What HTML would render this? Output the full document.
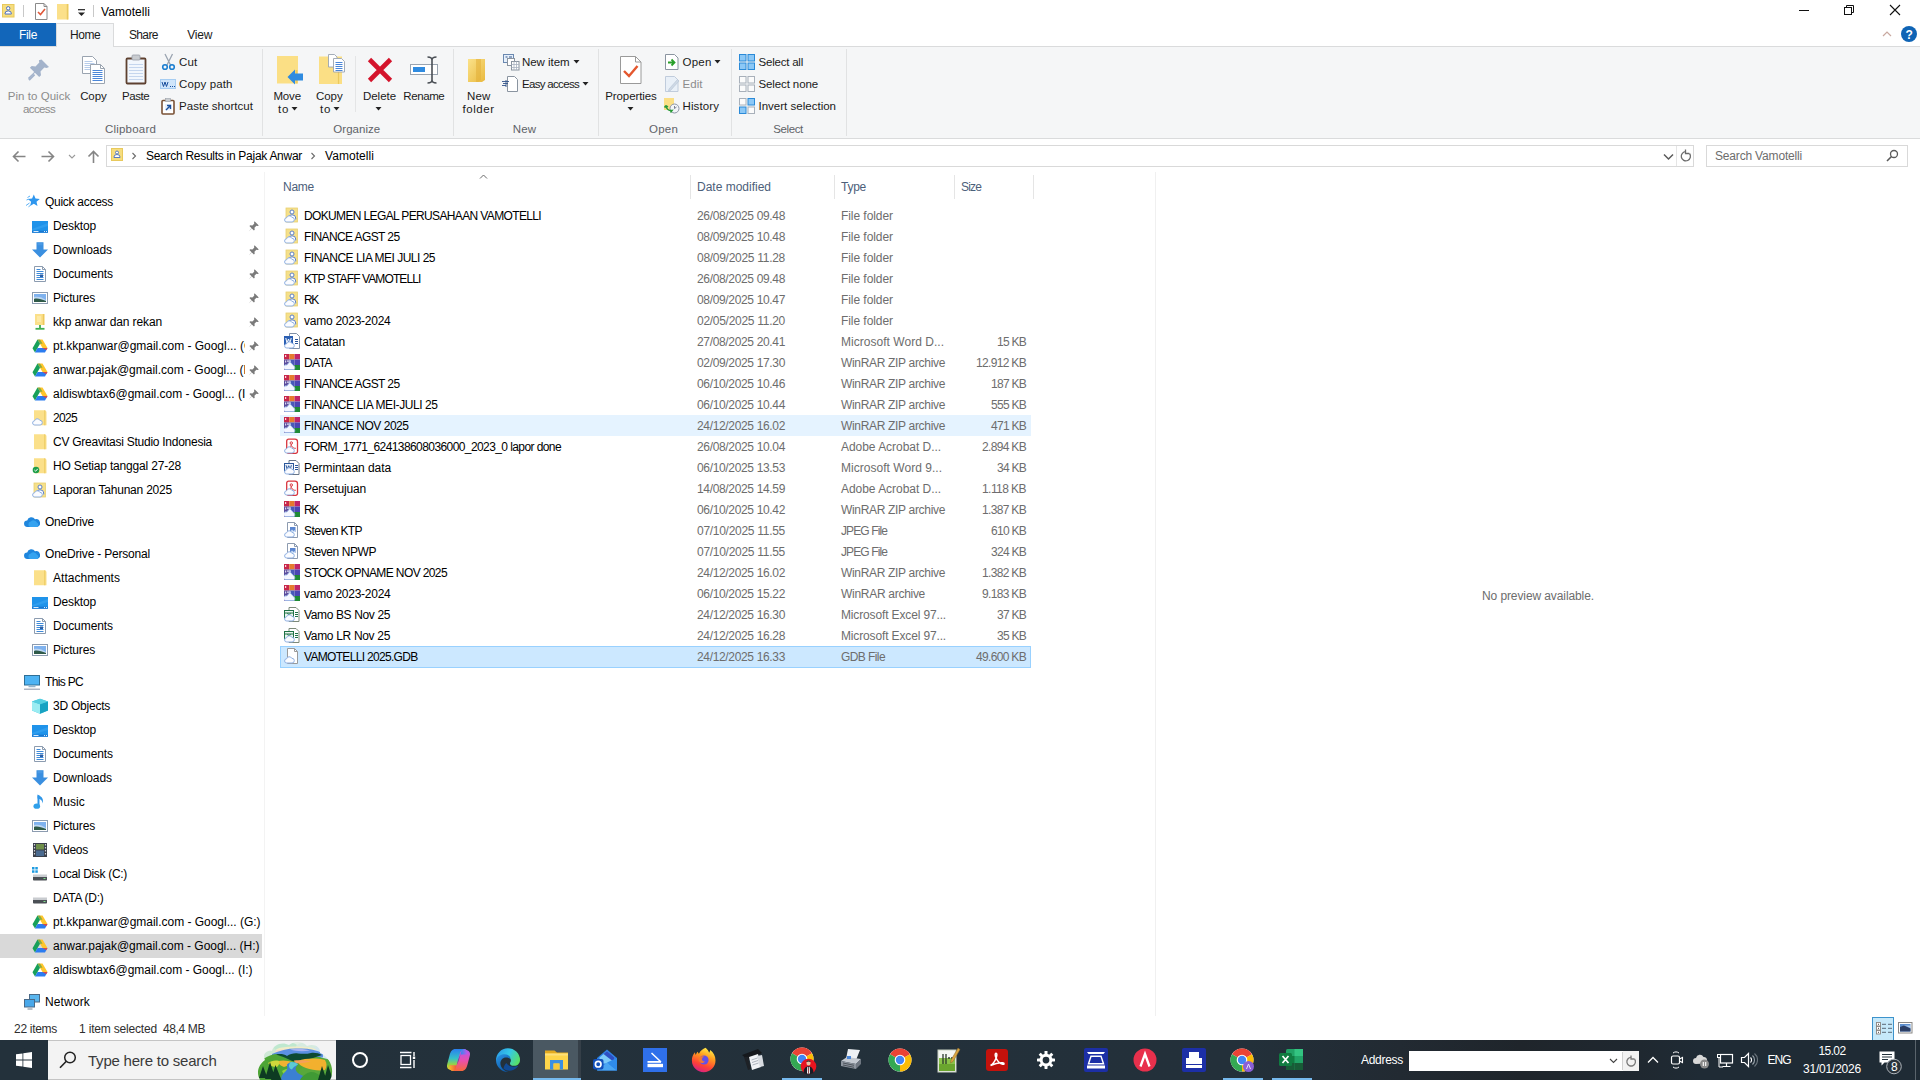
<!DOCTYPE html>
<html lang="en"><head><meta charset="utf-8"><title>Vamotelli</title>
<style>
html,body{margin:0;padding:0;background:#fff;overflow:hidden}
body{width:1920px;height:1080px;position:relative;font-family:"Liberation Sans",sans-serif;font-size:12px}
.t{position:absolute;white-space:pre;display:block}
.r{position:absolute;display:block}
</style></head>
<body>
<svg class="r" style="left:2px;top:4px;" width="13" height="14" viewBox="0 0 13 14"><rect x=".5" y=".5" width="11.500" height="12.500" fill="#f6dd7e" stroke="#e8c95c"/><circle cx="6.200" cy="4.300" r="1.700" fill="#fff" stroke="#4a6fc0" stroke-width="1"/><path d="M3 10v-.5a3.200 2.600 0 0 1 6.400 0v.5z" fill="#fff" stroke="#4a6fc0" stroke-width="1"/></svg>
<div class="r" style="left:23px;top:5px;width:1px;height:12px;background:#c8c8c8;"></div>
<svg class="r" style="left:35px;top:3px;" width="13" height="17" viewBox="0 0 13 17"><path d="M.5 .5h8.500l3 3v13h-11.500z" fill="#fff" stroke="#8a8a8a"/><path d="M9 .5v3h3" fill="none" stroke="#8a8a8a"/><path d="M3 9l2.500 2.500l4.500-5.500" fill="none" stroke="#e0583a" stroke-width="1.600"/></svg>
<svg class="r" style="left:57px;top:4px;" width="13" height="16" viewBox="0 0 13 16"><rect x="0" y="0" width="11.500" height="15.500" fill="#fbe08a"/><path d="M10.500 0v15.500" stroke="#e9c960" stroke-width="1.500"/></svg>
<svg class="r" style="left:77px;top:9px;" width="10" height="8" viewBox="0 0 10 8"><path d="M1 .7h7" stroke="#222" stroke-width="1.200"/><path d="M1 3.500h7l-3.500 3.500z" fill="#222"/></svg>
<div class="r" style="left:93px;top:5px;width:1px;height:12px;background:#c8c8c8;"></div>
<span class="t" style="left:101.00px;top:4.00px;font-size:12px;line-height:16px;color:#000;letter-spacing:0.060px;">Vamotelli</span>
<svg class="r" style="left:1798px;top:4px;" width="12" height="12" viewBox="0 0 12 12"><path d="M1 6.500h10" stroke="#111" stroke-width="1"/></svg>
<svg class="r" style="left:1843px;top:4px;" width="12" height="12" viewBox="0 0 12 12"><rect x="1.500" y="3.500" width="7" height="7" fill="none" stroke="#111"/><path d="M3.500 3.500v-2h7v7h-2" fill="none" stroke="#111"/></svg>
<svg class="r" style="left:1889px;top:4px;" width="12" height="12" viewBox="0 0 12 12"><path d="M1 1l10 10M11 1l-10 10" stroke="#111" stroke-width="1.100"/></svg>
<div class="r" style="left:0px;top:23px;width:56px;height:23px;background:#1266ba;"></div>
<span class="t" style="left:19.00px;top:27.00px;font-size:12px;line-height:16px;color:#fff;letter-spacing:-0.334px;">File</span>
<div class="r" style="left:56px;top:23px;width:58px;height:24px;background:#f5f6f7;border:1px solid #dadbdc;border-bottom:none;box-sizing:border-box;z-index:2"></div>
<span class="t" style="left:70.10px;top:27.00px;font-size:12px;line-height:16px;color:#1a1a1a;letter-spacing:-0.502px;z-index:3;">Home</span>
<span class="t" style="left:128.90px;top:27.00px;font-size:12px;line-height:16px;color:#1a1a1a;letter-spacing:-0.604px;">Share</span>
<span class="t" style="left:187.20px;top:27.00px;font-size:12px;line-height:16px;color:#1a1a1a;letter-spacing:-0.198px;">View</span>
<svg class="r" style="left:1882px;top:30px;" width="10" height="8" viewBox="0 0 10 8"><path d="M1 6l4-4l4 4" fill="none" stroke="#c9a9a0" stroke-width="1.200"/></svg>
<div class="r" style="left:1901px;top:26px;width:16px;height:16px;border-radius:50%;background:#0f64b5"></div>
<span class="t" style="left:1905.50px;top:27.00px;font-size:12px;line-height:16px;color:#fff;letter-spacing:-0.329px;font-weight:bold;">?</span>
<div class="r" style="left:0px;top:46px;width:1920px;height:93px;background:#f5f6f7;border-top:1px solid #dadbdc;border-bottom:1px solid #dadbdc;box-sizing:border-box"></div>
<div class="r" style="left:262px;top:49px;width:1px;height:87px;background:#e1e2e3;"></div>
<div class="r" style="left:453px;top:49px;width:1px;height:87px;background:#e1e2e3;"></div>
<div class="r" style="left:598px;top:49px;width:1px;height:87px;background:#e1e2e3;"></div>
<div class="r" style="left:731px;top:49px;width:1px;height:87px;background:#e1e2e3;"></div>
<div class="r" style="left:846px;top:49px;width:1px;height:87px;background:#e1e2e3;"></div>
<div class="r" style="left:355px;top:56px;width:1px;height:56px;background:#e4e5e6;"></div>
<svg class="r" style="left:27px;top:58px;" width="24" height="24" viewBox="0 0 24 24"><path d="M14.500 1.500l7.500 7.500l-2.300 1l-2.400-.4l-3.800 3.800l.5 3.800l-1.800 1.800l-4.300-4.300l-6 6.300l-1-1l6.300-6l-4.300-4.300l1.800-1.800l3.800.5l3.800-3.800l-.4-2.400z" fill="#a3b3cb"/><path d="M2 22l5.500-5.500" stroke="#a3b3cb" stroke-width="2"/></svg>
<span class="t" style="left:7.75px;top:89.00px;font-size:11.5px;line-height:14px;color:#8c8c8c;letter-spacing:0.042px;">Pin to Quick</span>
<span class="t" style="left:23.00px;top:101.50px;font-size:11.5px;line-height:14px;color:#8c8c8c;letter-spacing:-0.632px;">access</span>
<svg class="r" style="left:81px;top:55px;" width="26" height="30" viewBox="0 0 26 30"><path d="M1.500 1.500h10l4 4v13h-14z" fill="#fff" stroke="#9aa4b0"/><path d="M3.500 6.500h8M3.500 8.500h10M3.500 10.500h10M3.500 12.500h10M3.500 14.500h10" stroke="#b8cdea" stroke-width="1"/><path d="M9.500 9.500h10l4 4v15h-14z" fill="#fff" stroke="#9aa4b0"/><path d="M19.500 9.500v4h4" fill="none" stroke="#9aa4b0"/><path d="M11.500 15.500h10M11.500 17.500h10M11.500 19.500h10M11.500 21.500h10M11.500 23.500h10M11.500 25.500h10" stroke="#4a86d8" stroke-width="1"/></svg>
<span class="t" style="left:80.15px;top:89.00px;font-size:11.5px;line-height:14px;color:#1a1a1a;letter-spacing:-0.086px;">Copy</span>
<svg class="r" style="left:125px;top:54px;" width="22" height="31" viewBox="0 0 22 31"><rect x="1.500" y="4.500" width="19" height="25" rx="1" fill="#f2f7fd" stroke="#5e4130" stroke-width="1.800"/><rect x="7" y="1" width="8" height="5" rx="1" fill="#c9ccd0" stroke="#9aa0a8" stroke-width=".8"/><path d="M4 10.500h14M4 13.500h14M4 16.500h14M4 19.500h14M4 22.500h14M4 25.500h14" stroke="#c5d6ee" stroke-width="1"/></svg>
<span class="t" style="left:122.10px;top:89.00px;font-size:11.5px;line-height:14px;color:#1a1a1a;letter-spacing:-0.481px;">Paste</span>
<svg class="r" style="left:161px;top:53px;" width="15" height="18" viewBox="0 0 15 18"><path d="M4 1l5.500 11M11.500 1l-5.500 11" stroke="#9aa4b0" stroke-width="1.300" fill="none"/><circle cx="4" cy="14" r="2.300" fill="none" stroke="#1d7fd0" stroke-width="1.600"/><circle cx="11" cy="14" r="2.300" fill="none" stroke="#1d7fd0" stroke-width="1.600"/></svg>
<span class="t" style="left:179.00px;top:54.00px;font-size:11.5px;line-height:16px;color:#1a1a1a;letter-spacing:0.202px;">Cut</span>
<svg class="r" style="left:160px;top:79px;" width="16" height="10" viewBox="0 0 16 10"><rect x="0" y="0" width="16" height="10" fill="#cfe5fa"/><rect x=".5" y=".5" width="15" height="9" fill="none" stroke="#a6cdf2"/><path d="M2 3l1.500 4.500l1.500-4.500l1.500 4.500l1.500-4.500" stroke="#1a4f9c" stroke-width="1" fill="none"/><path d="M10 7.500h1M12 7.500h1M14 7.500h1" stroke="#1a4f9c" stroke-width="1.200"/></svg>
<span class="t" style="left:179.00px;top:76.00px;font-size:11.5px;line-height:16px;color:#1a1a1a;letter-spacing:0.120px;">Copy path</span>
<svg class="r" style="left:161px;top:98px;" width="14" height="17" viewBox="0 0 14 17"><rect x="1" y="2.500" width="12" height="13.500" rx="1" fill="#fff" stroke="#7a5236" stroke-width="1.600"/><rect x="4.500" y=".5" width="5" height="3" fill="#c9ccd0" stroke="#9aa0a8" stroke-width=".6"/><rect x="4" y="6" width="6.500" height="6.500" fill="#e8f0fb"/><path d="M5 12l4-4M6 7.500h3.500v3.500" stroke="#1a4f9c" stroke-width="1.400" fill="none"/></svg>
<span class="t" style="left:179.00px;top:98.00px;font-size:11.5px;line-height:16px;color:#1a1a1a;letter-spacing:0.035px;">Paste shortcut</span>
<span class="t" style="left:105.00px;top:121.00px;font-size:11.5px;line-height:16px;color:#5f6368;letter-spacing:0.198px;">Clipboard</span>
<svg class="r" style="left:277px;top:56px;" width="28" height="29" viewBox="0 0 28 29"><rect x="0" y="0" width="21" height="27.500" fill="#fbdf85"/><path d="M19.500 14v13.500" stroke="#ecc95e" stroke-width="2"/><path d="M10.500 21l7.500-7.500v4h8v7h-8v4z" fill="#2f8be0"/></svg>
<span class="t" style="left:273.45px;top:89.00px;font-size:11.5px;line-height:14px;color:#1a1a1a;letter-spacing:-0.155px;">Move</span>
<span class="t" style="left:278.00px;top:101.50px;font-size:11.5px;line-height:14px;color:#1a1a1a;letter-spacing:0.705px;">to</span>
<svg class="r" style="left:291px;top:106px;" width="8" height="6" viewBox="0 0 8 6"><path d="M.5 1h6l-3 3.500z" fill="#222"/></svg>
<svg class="r" style="left:319px;top:53px;" width="28" height="32" viewBox="0 0 28 32"><rect x="0" y="3.500" width="23" height="27.500" fill="#fbdf85"/><path d="M19.500 18v13" stroke="#ecc95e" stroke-width="1.200"/><path d="M9.500 1.500h6l2.500 2.500v10h-8.500z" fill="#fff" stroke="#9aa4b0" stroke-width=".9"/><path d="M14.500 5.500h8l3 3v10.500h-11z" fill="#fff" stroke="#9aa4b0" stroke-width=".9"/><path d="M16.500 9.500h7M16.500 11.500h7M16.500 13.500h7M16.500 15.500h7M16.500 17.500h7" stroke="#4a86d8" stroke-width="1"/></svg>
<span class="t" style="left:316.05px;top:89.00px;font-size:11.5px;line-height:14px;color:#1a1a1a;letter-spacing:-0.086px;">Copy</span>
<span class="t" style="left:320.00px;top:101.50px;font-size:11.5px;line-height:14px;color:#1a1a1a;letter-spacing:0.705px;">to</span>
<svg class="r" style="left:333px;top:106px;" width="8" height="6" viewBox="0 0 8 6"><path d="M.5 1h6l-3 3.500z" fill="#222"/></svg>
<svg class="r" style="left:367px;top:57px;" width="26" height="26" viewBox="0 0 26 26"><path d="M2.500 2.500l21 21M23.500 2.500l-21 21" stroke="#d4142c" stroke-width="4.600"/></svg>
<span class="t" style="left:363.00px;top:89.00px;font-size:11.5px;line-height:14px;color:#1a1a1a;letter-spacing:-0.040px;">Delete</span>
<svg class="r" style="left:375px;top:106px;" width="8" height="6" viewBox="0 0 8 6"><path d="M.5 1h6l-3 3.500z" fill="#222"/></svg>
<svg class="r" style="left:410px;top:56px;" width="29" height="28" viewBox="0 0 29 28"><rect x=".5" y="8.500" width="27" height="10" fill="#fff" stroke="#9aa4b0"/><rect x="3" y="11" width="12" height="5" fill="#2f8be0"/><path d="M22 2v24M17.500 1c2.500 0 4.500 1 4.500 3c0-2 2-3 4.500-3M17.500 27c2.500 0 4.500-1 4.500-3c0 2 2 3 4.500 3" stroke="#4a4f55" stroke-width="1.600" fill="none"/></svg>
<span class="t" style="left:403.30px;top:89.00px;font-size:11.5px;line-height:14px;color:#1a1a1a;letter-spacing:-0.411px;">Rename</span>
<span class="t" style="left:333.30px;top:121.00px;font-size:11.5px;line-height:16px;color:#5f6368;letter-spacing:0.043px;">Organize</span>
<svg class="r" style="left:467px;top:57px;" width="21" height="27" viewBox="0 0 21 27"><defs><linearGradient id="nf" x1="0" y1="0" x2="1" y2="1"><stop offset="0" stop-color="#fbe28a"/><stop offset="1" stop-color="#e9b93e"/></linearGradient></defs><path d="M1 2h17v21l-3 2h-14z" fill="url(#nf)"/><path d="M9 2h5v21l-3 2h-2z" fill="#e2ae38" opacity=".55"/></svg>
<span class="t" style="left:467.05px;top:89.00px;font-size:11.5px;line-height:14px;color:#1a1a1a;letter-spacing:0.165px;">New</span>
<span class="t" style="left:462.50px;top:101.50px;font-size:11.5px;line-height:14px;color:#1a1a1a;letter-spacing:0.539px;">folder</span>
<svg class="r" style="left:503px;top:54px;" width="17" height="17" viewBox="0 0 17 17"><rect x=".5" y=".5" width="10" height="8" fill="#e6f0fb" stroke="#6a88b0"/><path d="M2.500 3h2M6 3h3" stroke="#34558a"/><rect x="4.500" y="4.500" width="7" height="7" fill="#fff" stroke="#8a94a0"/><rect x="8.500" y="7.500" width="7.500" height="8.500" fill="#fff" stroke="#8a94a0"/><path d="M8.500 10.500h7.500M8.500 13.500h7.500M11 7.500v8.500M13.500 7.500v8.500" stroke="#a8b2c0" stroke-width=".8"/></svg>
<span class="t" style="left:522.00px;top:54.00px;font-size:11.5px;line-height:16px;color:#1a1a1a;letter-spacing:-0.053px;">New item</span>
<svg class="r" style="left:573px;top:59px;" width="8" height="6" viewBox="0 0 8 6"><path d="M.5 1h6l-3 3.500z" fill="#222"/></svg>
<svg class="r" style="left:502px;top:76px;" width="18" height="17" viewBox="0 0 18 17"><path d="M5.500 .5h7l3 3v12h-10z" fill="#fff" stroke="#8a94a0"/><path d="M0 5.500h7M1 7.500h5M0 9.500h4M4 4v7" stroke="#34558a" stroke-width=".9"/></svg>
<span class="t" style="left:522.00px;top:76.00px;font-size:11.5px;line-height:16px;color:#1a1a1a;letter-spacing:-0.686px;">Easy access</span>
<svg class="r" style="left:582px;top:81px;" width="8" height="6" viewBox="0 0 8 6"><path d="M.5 1h6l-3 3.500z" fill="#222"/></svg>
<span class="t" style="left:512.75px;top:121.00px;font-size:11.5px;line-height:16px;color:#5f6368;letter-spacing:0.165px;">New</span>
<svg class="r" style="left:620px;top:56px;" width="22" height="29" viewBox="0 0 22 29"><path d="M.5 .5h15l5.500 5.500v21.500h-20.500z" fill="#fff" stroke="#9a9a9a"/><path d="M15.500 .5v5.500h5.500" fill="none" stroke="#9a9a9a"/><path d="M4 15l5 5l8.500-10" fill="none" stroke="#e4572e" stroke-width="2.400"/></svg>
<span class="t" style="left:605.25px;top:89.00px;font-size:11.5px;line-height:14px;color:#1a1a1a;letter-spacing:-0.091px;">Properties</span>
<svg class="r" style="left:626.5px;top:106px;" width="8" height="6" viewBox="0 0 8 6"><path d="M.5 1h6l-3 3.500z" fill="#222"/></svg>
<svg class="r" style="left:665px;top:54px;" width="14" height="16" viewBox="0 0 14 16"><path d="M.5 .5h9l3.500 3.500v11.500h-12.500z" fill="#fff" stroke="#8a94a0"/><path d="M3 8.500h6M6.500 5.500l3 3l-3 3" stroke="#2aa02a" stroke-width="1.800" fill="none"/></svg>
<span class="t" style="left:682.50px;top:54.00px;font-size:11.5px;line-height:16px;color:#1a1a1a;letter-spacing:0.217px;">Open</span>
<svg class="r" style="left:714px;top:59px;" width="8" height="6" viewBox="0 0 8 6"><path d="M.5 1h6l-3 3.500z" fill="#222"/></svg>
<svg class="r" style="left:665px;top:76px;" width="15" height="16" viewBox="0 0 15 16"><path d="M.5 .5h9l3.500 3.500v11.500h-12.500z" fill="#e9f0f8" stroke="#c0ccdc"/><path d="M4 13l8.500-9.500l1.500 1.500l-8.500 9.500l-2 .5z" fill="#cfd9e6" stroke="#b4c2d4" stroke-width=".6"/></svg>
<span class="t" style="left:682.50px;top:76.00px;font-size:11.5px;line-height:16px;color:#8c8c8c;letter-spacing:0.046px;">Edit</span>
<svg class="r" style="left:663px;top:97px;" width="17" height="17" viewBox="0 0 17 17"><rect x="1" y="1" width="10" height="12" fill="#fbdf85"/><circle cx="11.500" cy="11.500" r="4.500" fill="#f2f4f8" stroke="#8a94a6" stroke-width="1"/><path d="M11.500 9v2.500l2-1.500" stroke="#6a7486" stroke-width=".9" fill="none"/><path d="M3 8.500c0 3.500 3 5.500 6 5l-1.500 2M3 8.500l-1.500 2M3 8.500l2 1.500" stroke="#2a9a3a" stroke-width="1.500" fill="none"/></svg>
<span class="t" style="left:682.50px;top:98.00px;font-size:11.5px;line-height:16px;color:#1a1a1a;letter-spacing:0.103px;">History</span>
<span class="t" style="left:649.00px;top:121.00px;font-size:11.5px;line-height:16px;color:#5f6368;letter-spacing:0.217px;">Open</span>
<svg class="r" style="left:739px;top:54px;" width="16" height="16" viewBox="0 0 16 16"><rect x="0.5" y="0.5" width="6.500" height="6.500" fill="#8cc8f6" stroke="#2a8ad8" stroke-width="1"/><rect x="9" y="0.5" width="6.500" height="6.500" fill="#8cc8f6" stroke="#2a8ad8" stroke-width="1"/><rect x="0.5" y="9" width="6.500" height="6.500" fill="#8cc8f6" stroke="#2a8ad8" stroke-width="1"/><rect x="9" y="9" width="6.500" height="6.500" fill="#8cc8f6" stroke="#2a8ad8" stroke-width="1"/></svg>
<span class="t" style="left:758.50px;top:54.00px;font-size:11.5px;line-height:16px;color:#1a1a1a;letter-spacing:-0.216px;">Select all</span>
<svg class="r" style="left:739px;top:76px;" width="16" height="16" viewBox="0 0 16 16"><rect x="0.5" y="0.5" width="6.500" height="6.500" fill="#fbfbfb" stroke="#a8b0ba" stroke-width="1"/><rect x="9" y="0.5" width="6.500" height="6.500" fill="#fbfbfb" stroke="#a8b0ba" stroke-width="1"/><rect x="0.5" y="9" width="6.500" height="6.500" fill="#fbfbfb" stroke="#a8b0ba" stroke-width="1"/><rect x="9" y="9" width="6.500" height="6.500" fill="#fbfbfb" stroke="#a8b0ba" stroke-width="1"/></svg>
<span class="t" style="left:758.50px;top:76.00px;font-size:11.5px;line-height:16px;color:#1a1a1a;letter-spacing:-0.112px;">Select none</span>
<svg class="r" style="left:739px;top:98px;" width="16" height="16" viewBox="0 0 16 16"><rect x="0.5" y="0.5" width="6.500" height="6.500" fill="#fbfbfb" stroke="#a8b0ba" stroke-width="1"/><rect x="9" y="0.5" width="6.500" height="6.500" fill="#8cc8f6" stroke="#2a8ad8" stroke-width="1"/><rect x="0.5" y="9" width="6.500" height="6.500" fill="#8cc8f6" stroke="#2a8ad8" stroke-width="1"/><rect x="9" y="9" width="6.500" height="6.500" fill="#fbfbfb" stroke="#a8b0ba" stroke-width="1"/></svg>
<span class="t" style="left:758.50px;top:98.00px;font-size:11.5px;line-height:16px;color:#1a1a1a;letter-spacing:0.010px;">Invert selection</span>
<span class="t" style="left:773.25px;top:121.00px;font-size:11.5px;line-height:16px;color:#5f6368;letter-spacing:-0.410px;">Select</span>
<svg class="r" style="left:12px;top:150px;" width="14" height="13" viewBox="0 0 14 13"><path d="M1.500 6.500h12M6.500 1.500l-5 5l5 5" fill="none" stroke="#858585" stroke-width="1.600"/></svg>
<svg class="r" style="left:41px;top:150px;" width="14" height="13" viewBox="0 0 14 13"><path d="M.5 6.500h12M7.500 1.500l5 5l-5 5" fill="none" stroke="#858585" stroke-width="1.600"/></svg>
<svg class="r" style="left:68px;top:153.5px;" width="8" height="6" viewBox="0 0 8 6"><path d="M1 1l3 3l3-3" fill="none" stroke="#9a9a9a" stroke-width="1.100"/></svg>
<svg class="r" style="left:87px;top:150px;" width="13" height="14" viewBox="0 0 13 14"><path d="M6.500 13v-11.500M1.500 6.500l5-5l5 5" fill="none" stroke="#858585" stroke-width="1.600"/></svg>
<div class="r" style="left:106px;top:145px;width:1588px;height:22px;background:#fff;border:1px solid #d9d9d9;box-sizing:border-box"></div>
<div class="r" style="left:1676px;top:146px;width:1px;height:20px;background:#e5e5e5;"></div>
<svg class="r" style="left:111px;top:148px;" width="12" height="13" viewBox="0 0 12 13"><rect x=".5" y=".5" width="11" height="12" fill="#f6dd7e" stroke="#e8c95c"/><circle cx="6" cy="4.500" r="1.500" fill="#fff" stroke="#4a6fc0" stroke-width=".9"/><path d="M3 9.500v-.5a3 2.500 0 0 1 6 0v.5z" fill="#fff" stroke="#4a6fc0" stroke-width=".9"/></svg>
<svg class="r" style="left:131px;top:151.5px;" width="6" height="8" viewBox="0 0 6 8"><path d="M1.500 1l3 3l-3 3" fill="none" stroke="#6a6a6a" stroke-width="1.100"/></svg>
<span class="t" style="left:146.00px;top:147.50px;font-size:12px;line-height:16px;color:#000;letter-spacing:-0.278px;">Search Results in Pajak Anwar</span>
<svg class="r" style="left:310px;top:151.5px;" width="6" height="8" viewBox="0 0 6 8"><path d="M1.500 1l3 3l-3 3" fill="none" stroke="#6a6a6a" stroke-width="1.100"/></svg>
<span class="t" style="left:325.00px;top:147.50px;font-size:12px;line-height:16px;color:#000;letter-spacing:0.060px;">Vamotelli</span>
<svg class="r" style="left:1663px;top:153px;" width="11" height="8" viewBox="0 0 11 8"><path d="M1 1.500l4.500 4.500l4.500-4.500" fill="none" stroke="#5a5a5a" stroke-width="1.500"/></svg>
<svg class="r" style="left:1679px;top:149px;" width="13" height="14" viewBox="0 0 13 14"><path d="M10.500 4.500a4.600 4.600 0 1 1-3.500-1.800" fill="none" stroke="#6a6a6a" stroke-width="1.300"/><path d="M6.500 .5v4h3.800" fill="none" stroke="#6a6a6a" stroke-width="1.300"/></svg>
<div class="r" style="left:1706px;top:145px;width:202px;height:22px;background:#fff;border:1px solid #d9d9d9;box-sizing:border-box"></div>
<span class="t" style="left:1715.00px;top:147.50px;font-size:12px;line-height:16px;color:#6d6d6d;letter-spacing:-0.176px;">Search Vamotelli</span>
<svg class="r" style="left:1886px;top:149px;" width="13" height="13" viewBox="0 0 13 13"><circle cx="8" cy="5" r="3.500" fill="none" stroke="#5a5a5a" stroke-width="1.300"/><path d="M5.500 7.500l-4.500 4.500" stroke="#5a5a5a" stroke-width="1.600"/></svg>
<div class="r" style="left:0px;top:934px;width:262px;height:24px;background:#d9d9d9;"></div>
<div class="r" style="left:264px;top:172px;width:1px;height:844px;background:#f3f3f3;"></div>
<svg class="r" style="left:24px;top:194px;" width="16" height="16" viewBox="0 0 16 16"><path d="M9.800 .5l1.700 4l4.300.4l-3.300 2.900l1 4.300l-3.700-2.300l-3.700 2.300l1-4.300l-3.300-2.900l4.300-.4z" fill="#2e96ee"/><path d="M3.500 3.500l2.500-1.500M2.500 6l2-.8M2 11.500l3.500-2.500M4.500 12.800l2-1.500" stroke="#5ab0f5" stroke-width="1"/></svg>
<span class="t" style="left:45.00px;top:194.00px;font-size:12px;line-height:16px;color:#000;letter-spacing:-0.279px;">Quick access</span>
<svg class="r" style="left:32px;top:218px;" width="16" height="16" viewBox="0 0 16 16"><rect x="0" y="3" width="16" height="11.700" fill="#1f93ea"/><path d="M0 11l16-6v3l-16 5z" fill="#3aa5f2" opacity=".6"/><rect x="0" y="12.700" width="16" height="2" fill="#1877d0"/><path d="M1.500 13.500h5M12 13.500h1M14 13.500h1" stroke="#d6ebff" stroke-width="1"/></svg>
<span class="t" style="left:53.00px;top:218.00px;font-size:12px;line-height:16px;color:#000;letter-spacing:-0.146px;">Desktop</span>
<svg class="r" style="left:247px;top:220px;" width="13" height="13" viewBox="0 0 16 16"><path d="M9.300 1.500l5.200 5.200l-1.200.6l-1.800-.2l-2.300 2.300l.3 2.600l-1 1l-2.900-2.900l-3.600 3.900l3.900-3.600l-2.900-2.900l1-1l2.600.3l2.300-2.300l-.2-1.800z" fill="#7a7a7a"/></svg>
<svg class="r" style="left:32px;top:242px;" width="16" height="16" viewBox="0 0 16 16"><path d="M4.500 .3h7v7.200h4.500l-8 8l-8-8h4.500z" fill="#3a8fe0"/><path d="M5.500 .3h5v3h-5z" fill="#5aa6ea" opacity=".5"/></svg>
<span class="t" style="left:53.00px;top:242.00px;font-size:12px;line-height:16px;color:#000;letter-spacing:-0.040px;">Downloads</span>
<svg class="r" style="left:247px;top:244px;" width="13" height="13" viewBox="0 0 16 16"><path d="M9.300 1.500l5.200 5.200l-1.200.6l-1.800-.2l-2.300 2.300l.3 2.600l-1 1l-2.900-2.900l-3.600 3.900l3.900-3.600l-2.900-2.900l1-1l2.600.3l2.300-2.300l-.2-1.800z" fill="#7a7a7a"/></svg>
<svg class="r" style="left:32px;top:266px;" width="16" height="16" viewBox="0 0 16 16"><path d="M2.500 .5h8l3 3v12h-11z" fill="#fff" stroke="#8c9cb0" stroke-width="1"/><path d="M10.500 .5v3h3" fill="none" stroke="#8c9cb0"/><path d="M4.500 3.500h4M4.500 5.500h7M4.500 7.500h7M4.500 9.500h7M4.500 11.500h7M4.500 13.500h7" stroke="#3f8ad8" stroke-width="1"/><rect x="8" y="8.500" width="3" height="2.500" fill="#2a5fa8"/></svg>
<span class="t" style="left:53.00px;top:266.00px;font-size:12px;line-height:16px;color:#000;letter-spacing:-0.076px;">Documents</span>
<svg class="r" style="left:247px;top:268px;" width="13" height="13" viewBox="0 0 16 16"><path d="M9.300 1.500l5.200 5.200l-1.200.6l-1.800-.2l-2.300 2.300l.3 2.600l-1 1l-2.900-2.900l-3.600 3.900l3.900-3.600l-2.900-2.900l1-1l2.600.3l2.300-2.300l-.2-1.800z" fill="#7a7a7a"/></svg>
<svg class="r" style="left:32px;top:290px;" width="16" height="16" viewBox="0 0 16 16"><rect x=".5" y="2.500" width="15" height="11" fill="#fff" stroke="#8c9cb0" stroke-width="1"/><rect x="2" y="4" width="12" height="8" fill="#7fb2ee"/><path d="M2 7c4-1 8 0 12 3v2h-12z" fill="#bcd6f2"/><path d="M2 9c3-1 7 0 12 2v1h-12z" fill="#2f5a48"/></svg>
<span class="t" style="left:53.00px;top:290.00px;font-size:12px;line-height:16px;color:#000;letter-spacing:-0.168px;">Pictures</span>
<svg class="r" style="left:247px;top:292px;" width="13" height="13" viewBox="0 0 16 16"><path d="M9.300 1.500l5.200 5.200l-1.200.6l-1.800-.2l-2.300 2.300l.3 2.600l-1 1l-2.900-2.900l-3.600 3.900l3.900-3.600l-2.900-2.900l1-1l2.600.3l2.300-2.300l-.2-1.800z" fill="#7a7a7a"/></svg>
<svg class="r" style="left:32px;top:314px;" width="16" height="16" viewBox="0 0 16 16"><rect x="3" y="0" width="9.500" height="11" fill="#fbe08a"/><path d="M11.500 0v11" stroke="#edc85e" stroke-width="1.500"/><path d="M5 3h4M5 5h4M5 7h4" stroke="#fff3c4" stroke-width="1"/><path d="M8 11v3" stroke="#3fae52" stroke-width="1.800"/><path d="M3.500 14.800h9" stroke="#3fae52" stroke-width="1.800"/></svg>
<span class="t" style="left:53.00px;top:314.00px;font-size:12px;line-height:16px;color:#000;letter-spacing:-0.126px;">kkp anwar dan rekan</span>
<svg class="r" style="left:247px;top:316px;" width="13" height="13" viewBox="0 0 16 16"><path d="M9.300 1.500l5.200 5.200l-1.200.6l-1.800-.2l-2.300 2.300l.3 2.600l-1 1l-2.900-2.900l-3.600 3.900l3.900-3.600l-2.900-2.900l1-1l2.600.3l2.300-2.300l-.2-1.800z" fill="#7a7a7a"/></svg>
<svg class="r" style="left:32px;top:338px;" width="16" height="16" viewBox="0 0 16 16"><path d="M5.500 1.500h5l5 8.500h-5z" fill="#ffc52c"/><path d="M5.500 1.500l2.500 4.300l-5 8.700l-2.500-4.300z" fill="#17a05a"/><path d="M3 14.500l2.500-4.500h10l-2.500 4.500z" fill="#2b7cf0"/><path d="M5.500 1.500h2.500l2.500 4.300h-2.500z" fill="#1b8f4e" opacity=".5"/><path d="M10.500 10h5l-1.200 2.200z" fill="#e8453c" opacity=".9"/></svg>
<span class="t" style="left:53.00px;top:338.00px;font-size:12px;line-height:16px;color:#000;letter-spacing:-0.020px;width:192px;overflow:hidden;">pt.kkpanwar@gmail.com - Googl... (G:)</span>
<svg class="r" style="left:247px;top:340px;" width="13" height="13" viewBox="0 0 16 16"><path d="M9.300 1.500l5.200 5.200l-1.200.6l-1.800-.2l-2.300 2.300l.3 2.600l-1 1l-2.900-2.900l-3.600 3.900l3.900-3.600l-2.900-2.900l1-1l2.600.3l2.300-2.300l-.2-1.800z" fill="#7a7a7a"/></svg>
<svg class="r" style="left:32px;top:362px;" width="16" height="16" viewBox="0 0 16 16"><path d="M5.500 1.500h5l5 8.500h-5z" fill="#ffc52c"/><path d="M5.500 1.500l2.500 4.300l-5 8.700l-2.500-4.300z" fill="#17a05a"/><path d="M3 14.500l2.500-4.500h10l-2.500 4.500z" fill="#2b7cf0"/><path d="M5.500 1.500h2.500l2.500 4.300h-2.500z" fill="#1b8f4e" opacity=".5"/><path d="M10.500 10h5l-1.200 2.200z" fill="#e8453c" opacity=".9"/></svg>
<span class="t" style="left:53.00px;top:362.00px;font-size:12px;line-height:16px;color:#000;letter-spacing:-0.011px;width:192px;overflow:hidden;">anwar.pajak@gmail.com - Googl... (H:)</span>
<svg class="r" style="left:247px;top:364px;" width="13" height="13" viewBox="0 0 16 16"><path d="M9.300 1.500l5.200 5.200l-1.200.6l-1.800-.2l-2.300 2.300l.3 2.600l-1 1l-2.900-2.900l-3.600 3.900l3.900-3.600l-2.900-2.900l1-1l2.600.3l2.300-2.300l-.2-1.800z" fill="#7a7a7a"/></svg>
<svg class="r" style="left:32px;top:386px;" width="16" height="16" viewBox="0 0 16 16"><path d="M5.500 1.500h5l5 8.500h-5z" fill="#ffc52c"/><path d="M5.500 1.500l2.500 4.300l-5 8.700l-2.500-4.300z" fill="#17a05a"/><path d="M3 14.500l2.500-4.500h10l-2.500 4.500z" fill="#2b7cf0"/><path d="M5.500 1.500h2.500l2.500 4.300h-2.500z" fill="#1b8f4e" opacity=".5"/><path d="M10.500 10h5l-1.200 2.200z" fill="#e8453c" opacity=".9"/></svg>
<span class="t" style="left:53.00px;top:386.00px;font-size:12px;line-height:16px;color:#000;letter-spacing:-0.020px;width:192px;overflow:hidden;">aldiswbtax6@gmail.com - Googl... (I:)</span>
<svg class="r" style="left:247px;top:388px;" width="13" height="13" viewBox="0 0 16 16"><path d="M9.300 1.500l5.200 5.200l-1.200.6l-1.800-.2l-2.300 2.300l.3 2.600l-1 1l-2.900-2.900l-3.600 3.900l3.900-3.600l-2.900-2.900l1-1l2.600.3l2.300-2.300l-.2-1.800z" fill="#7a7a7a"/></svg>
<svg class="r" style="left:32px;top:410px;" width="16" height="16" viewBox="0 0 16 16"><path d="M2 .3h11l1.500 1.500v13.500h-12.500z" fill="#fbe08a"/><path d="M12.800 .3v15" stroke="#ecc95e" stroke-width="1"/><path d="M2.800 15a2.100 2.100 0 0 1-.2-4.200a2.800 2.800 0 0 1 5.200-.5a2.300 2.300 0 0 1 .3 4.700z" fill="#fbfcff" stroke="#8fb0e2" stroke-width="1"/></svg>
<span class="t" style="left:53.00px;top:410.00px;font-size:12px;line-height:16px;color:#000;letter-spacing:-0.673px;">2025</span>
<svg class="r" style="left:32px;top:434px;" width="16" height="16" viewBox="0 0 16 16"><path d="M2 .3h11l1.500 1.500v13.500h-12.500z" fill="#fbe08a"/><path d="M12.800 .3v15" stroke="#ecc95e" stroke-width="1"/></svg>
<span class="t" style="left:53.00px;top:434.00px;font-size:12px;line-height:16px;color:#000;letter-spacing:-0.258px;">CV Greavitasi Studio Indonesia</span>
<svg class="r" style="left:32px;top:458px;" width="16" height="16" viewBox="0 0 16 16"><path d="M2 .3h11l1.500 1.500v13.500h-12.500z" fill="#fbe08a"/><path d="M12.800 .3v15" stroke="#ecc95e" stroke-width="1"/><circle cx="4" cy="12" r="3.3" fill="#1e9e4a"/><path d="M2.4 12l1.2 1.2l2.2-2.4" stroke="#fff" stroke-width="1" fill="none"/></svg>
<span class="t" style="left:53.00px;top:458.00px;font-size:12px;line-height:16px;color:#000;letter-spacing:-0.177px;">HO Setiap tanggal 27-28</span>
<svg class="r" style="left:32px;top:482px;" width="16" height="16" viewBox="0 0 16 16"><rect x="2" y="1" width="11.5" height="14" fill="#f5e08a"/><rect x="2" y="1" width="11.5" height="14" fill="none" stroke="#e9d070" stroke-width=".8"/><circle cx="8" cy="5" r="2" fill="#fff" stroke="#5b7fc8" stroke-width="1"/><path d="M4.3 12.5v-1.5a3.7 3.2 0 0 1 7.4 0v1.5" fill="#fff" stroke="#5b7fc8" stroke-width="1"/><path d="M2.800 15a2.100 2.100 0 0 1-.2-4.200a2.800 2.800 0 0 1 5.200-.5a2.300 2.300 0 0 1 .3 4.700z" fill="#fbfcff" stroke="#8fb0e2" stroke-width="1"/></svg>
<span class="t" style="left:53.00px;top:482.00px;font-size:12px;line-height:16px;color:#000;letter-spacing:-0.211px;">Laporan Tahunan 2025</span>
<svg class="r" style="left:24px;top:514px;" width="16" height="16" viewBox="0 0 16 16"><path d="M3.500 13a3.300 3.300 0 0 1-.3-6.600a4.300 4.300 0 0 1 7.800-1.200a3.600 3.600 0 0 1 2 7.800z" fill="#1f86dd"/><path d="M6 13a3 3 0 0 1 .8-5.600a3.800 3.800 0 0 1 6.200 1.400a2.300 2.300 0 0 1 0 4.200z" fill="#35a3f0"/></svg>
<span class="t" style="left:45.00px;top:514.00px;font-size:12px;line-height:16px;color:#000;letter-spacing:-0.210px;">OneDrive</span>
<svg class="r" style="left:24px;top:546px;" width="16" height="16" viewBox="0 0 16 16"><path d="M3.500 13a3.300 3.300 0 0 1-.3-6.600a4.300 4.300 0 0 1 7.800-1.200a3.600 3.600 0 0 1 2 7.800z" fill="#1f86dd"/><path d="M6 13a3 3 0 0 1 .8-5.600a3.800 3.800 0 0 1 6.200 1.400a2.300 2.300 0 0 1 0 4.200z" fill="#35a3f0"/></svg>
<span class="t" style="left:45.00px;top:546.00px;font-size:12px;line-height:16px;color:#000;letter-spacing:-0.195px;">OneDrive - Personal</span>
<svg class="r" style="left:32px;top:570px;" width="16" height="16" viewBox="0 0 16 16"><path d="M2 .3h11l1.500 1.500v13.500h-12.500z" fill="#fbe08a"/><path d="M12.800 .3v15" stroke="#ecc95e" stroke-width="1"/></svg>
<span class="t" style="left:53.00px;top:570.00px;font-size:12px;line-height:16px;color:#000;letter-spacing:0.028px;">Attachments</span>
<svg class="r" style="left:32px;top:594px;" width="16" height="16" viewBox="0 0 16 16"><rect x="0" y="3" width="16" height="11.700" fill="#1f93ea"/><path d="M0 11l16-6v3l-16 5z" fill="#3aa5f2" opacity=".6"/><rect x="0" y="12.700" width="16" height="2" fill="#1877d0"/><path d="M1.500 13.500h5M12 13.500h1M14 13.500h1" stroke="#d6ebff" stroke-width="1"/></svg>
<span class="t" style="left:53.00px;top:594.00px;font-size:12px;line-height:16px;color:#000;letter-spacing:-0.146px;">Desktop</span>
<svg class="r" style="left:32px;top:618px;" width="16" height="16" viewBox="0 0 16 16"><path d="M2.500 .5h8l3 3v12h-11z" fill="#fff" stroke="#8c9cb0" stroke-width="1"/><path d="M10.500 .5v3h3" fill="none" stroke="#8c9cb0"/><path d="M4.500 3.500h4M4.500 5.500h7M4.500 7.500h7M4.500 9.500h7M4.500 11.500h7M4.500 13.500h7" stroke="#3f8ad8" stroke-width="1"/><rect x="8" y="8.500" width="3" height="2.500" fill="#2a5fa8"/></svg>
<span class="t" style="left:53.00px;top:618.00px;font-size:12px;line-height:16px;color:#000;letter-spacing:-0.076px;">Documents</span>
<svg class="r" style="left:32px;top:642px;" width="16" height="16" viewBox="0 0 16 16"><rect x=".5" y="2.500" width="15" height="11" fill="#fff" stroke="#8c9cb0" stroke-width="1"/><rect x="2" y="4" width="12" height="8" fill="#7fb2ee"/><path d="M2 7c4-1 8 0 12 3v2h-12z" fill="#bcd6f2"/><path d="M2 9c3-1 7 0 12 2v1h-12z" fill="#2f5a48"/></svg>
<span class="t" style="left:53.00px;top:642.00px;font-size:12px;line-height:16px;color:#000;letter-spacing:-0.168px;">Pictures</span>
<svg class="r" style="left:24px;top:674px;" width="16" height="16" viewBox="0 0 16 16"><rect x=".5" y="1.500" width="15" height="9.500" fill="#4db3f3" stroke="#2f6f96" stroke-width="1"/><path d="M4.500 12.700h7" stroke="#7fa6c0" stroke-width="1"/><path d="M0 15.200h16" stroke="#9aa4b4" stroke-width="1.200"/></svg>
<span class="t" style="left:45.00px;top:674.00px;font-size:12px;line-height:16px;color:#000;letter-spacing:-0.668px;">This PC</span>
<svg class="r" style="left:32px;top:698px;" width="16" height="16" viewBox="0 0 16 16"><path d="M8 .8l8 2.700v9l-8 3.200l-8-3.200v-9z" fill="#3cc4dc"/><path d="M8 6.300v9.400l-8-3.200v-9z" fill="#9aecf2"/><path d="M8 6.300l8-2.800v9l-8 3.200z" fill="#18a2c2"/><path d="M0 3.500l8-2.700l8 2.700l-8 2.800z" fill="#56cfe0"/></svg>
<span class="t" style="left:53.00px;top:698.00px;font-size:12px;line-height:16px;color:#000;letter-spacing:-0.235px;">3D Objects</span>
<svg class="r" style="left:32px;top:722px;" width="16" height="16" viewBox="0 0 16 16"><rect x="0" y="3" width="16" height="11.700" fill="#1f93ea"/><path d="M0 11l16-6v3l-16 5z" fill="#3aa5f2" opacity=".6"/><rect x="0" y="12.700" width="16" height="2" fill="#1877d0"/><path d="M1.500 13.500h5M12 13.500h1M14 13.500h1" stroke="#d6ebff" stroke-width="1"/></svg>
<span class="t" style="left:53.00px;top:722.00px;font-size:12px;line-height:16px;color:#000;letter-spacing:-0.146px;">Desktop</span>
<svg class="r" style="left:32px;top:746px;" width="16" height="16" viewBox="0 0 16 16"><path d="M2.500 .5h8l3 3v12h-11z" fill="#fff" stroke="#8c9cb0" stroke-width="1"/><path d="M10.500 .5v3h3" fill="none" stroke="#8c9cb0"/><path d="M4.500 3.500h4M4.500 5.500h7M4.500 7.500h7M4.500 9.500h7M4.500 11.500h7M4.500 13.500h7" stroke="#3f8ad8" stroke-width="1"/><rect x="8" y="8.500" width="3" height="2.500" fill="#2a5fa8"/></svg>
<span class="t" style="left:53.00px;top:746.00px;font-size:12px;line-height:16px;color:#000;letter-spacing:-0.076px;">Documents</span>
<svg class="r" style="left:32px;top:770px;" width="16" height="16" viewBox="0 0 16 16"><path d="M4.500 .3h7v7.200h4.500l-8 8l-8-8h4.500z" fill="#3a8fe0"/><path d="M5.500 .3h5v3h-5z" fill="#5aa6ea" opacity=".5"/></svg>
<span class="t" style="left:53.00px;top:770.00px;font-size:12px;line-height:16px;color:#000;letter-spacing:-0.040px;">Downloads</span>
<svg class="r" style="left:32px;top:794px;" width="16" height="16" viewBox="0 0 16 16"><path d="M6.500 1.500v10" stroke="#2f96e8" stroke-width="2"/><path d="M5.500 .5c2.500 1.500 7 3 5 9c-.3-3.500-2-4.500-5-5z" fill="#2f96e8"/><ellipse cx="4.800" cy="12.200" rx="3.300" ry="2.600" fill="#2fa0ea"/></svg>
<span class="t" style="left:53.00px;top:794.00px;font-size:12px;line-height:16px;color:#000;letter-spacing:0.133px;">Music</span>
<svg class="r" style="left:32px;top:818px;" width="16" height="16" viewBox="0 0 16 16"><rect x=".5" y="2.500" width="15" height="11" fill="#fff" stroke="#8c9cb0" stroke-width="1"/><rect x="2" y="4" width="12" height="8" fill="#7fb2ee"/><path d="M2 7c4-1 8 0 12 3v2h-12z" fill="#bcd6f2"/><path d="M2 9c3-1 7 0 12 2v1h-12z" fill="#2f5a48"/></svg>
<span class="t" style="left:53.00px;top:818.00px;font-size:12px;line-height:16px;color:#000;letter-spacing:-0.168px;">Pictures</span>
<svg class="r" style="left:32px;top:842px;" width="16" height="16" viewBox="0 0 16 16"><rect x="1" y="1" width="14" height="14" fill="#3a3f4a"/><rect x="4" y="2" width="8" height="5.500" fill="#6f8f4a"/><rect x="4" y="8.500" width="8" height="5.500" fill="#4a6a8f"/><path d="M2.500 2v12M13.500 2v12" stroke="#d0d4da" stroke-width="1.200" stroke-dasharray="1.500 1.500"/></svg>
<span class="t" style="left:53.00px;top:842.00px;font-size:12px;line-height:16px;color:#000;letter-spacing:-0.245px;">Videos</span>
<svg class="r" style="left:32px;top:866px;" width="16" height="16" viewBox="0 0 16 16"><rect x="1" y="10" width="14" height="4.500" rx=".8" fill="#4a4f55"/><rect x="1" y="8.500" width="14" height="2.500" fill="#c9ccd0"/><rect x="11.500" y="12" width="2" height="1" fill="#7fe08a"/><rect x="0" y="1" width="2.500" height="2.500" fill="#1e9be0"/><rect x="3.300" y="1" width="2.500" height="2.500" fill="#1e9be0"/><rect x="0" y="4.300" width="2.500" height="2.500" fill="#1e9be0"/><rect x="3.300" y="4.300" width="2.500" height="2.500" fill="#1e9be0"/></svg>
<span class="t" style="left:53.00px;top:866.00px;font-size:12px;line-height:16px;color:#000;letter-spacing:-0.312px;">Local Disk (C:)</span>
<svg class="r" style="left:32px;top:890px;" width="16" height="16" viewBox="0 0 16 16"><rect x="1" y="9" width="14" height="4.500" rx=".8" fill="#4a4f55"/><rect x="1" y="7.500" width="14" height="2.500" fill="#c9ccd0"/><rect x="11.500" y="11" width="2" height="1" fill="#7fe08a"/></svg>
<span class="t" style="left:53.00px;top:890.00px;font-size:12px;line-height:16px;color:#000;letter-spacing:-0.265px;">DATA (D:)</span>
<svg class="r" style="left:32px;top:914px;" width="16" height="16" viewBox="0 0 16 16"><path d="M5.500 1.500h5l5 8.500h-5z" fill="#ffc52c"/><path d="M5.500 1.500l2.500 4.300l-5 8.700l-2.500-4.300z" fill="#17a05a"/><path d="M3 14.500l2.500-4.500h10l-2.500 4.500z" fill="#2b7cf0"/><path d="M5.500 1.500h2.500l2.500 4.300h-2.500z" fill="#1b8f4e" opacity=".5"/><path d="M10.500 10h5l-1.200 2.200z" fill="#e8453c" opacity=".9"/></svg>
<span class="t" style="left:53.00px;top:914.00px;font-size:12px;line-height:16px;color:#000;letter-spacing:-0.020px;">pt.kkpanwar@gmail.com - Googl... (G:)</span>
<svg class="r" style="left:32px;top:938px;" width="16" height="16" viewBox="0 0 16 16"><path d="M5.500 1.500h5l5 8.500h-5z" fill="#ffc52c"/><path d="M5.500 1.500l2.500 4.300l-5 8.700l-2.500-4.300z" fill="#17a05a"/><path d="M3 14.500l2.500-4.500h10l-2.500 4.500z" fill="#2b7cf0"/><path d="M5.500 1.500h2.500l2.500 4.300h-2.500z" fill="#1b8f4e" opacity=".5"/><path d="M10.500 10h5l-1.200 2.200z" fill="#e8453c" opacity=".9"/></svg>
<span class="t" style="left:53.00px;top:938.00px;font-size:12px;line-height:16px;color:#000;letter-spacing:-0.011px;">anwar.pajak@gmail.com - Googl... (H:)</span>
<svg class="r" style="left:32px;top:962px;" width="16" height="16" viewBox="0 0 16 16"><path d="M5.500 1.500h5l5 8.500h-5z" fill="#ffc52c"/><path d="M5.500 1.500l2.500 4.300l-5 8.700l-2.500-4.300z" fill="#17a05a"/><path d="M3 14.500l2.500-4.500h10l-2.500 4.500z" fill="#2b7cf0"/><path d="M5.500 1.500h2.500l2.500 4.300h-2.500z" fill="#1b8f4e" opacity=".5"/><path d="M10.500 10h5l-1.200 2.200z" fill="#e8453c" opacity=".9"/></svg>
<span class="t" style="left:53.00px;top:962.00px;font-size:12px;line-height:16px;color:#000;letter-spacing:-0.020px;">aldiswbtax6@gmail.com - Googl... (I:)</span>
<svg class="r" style="left:24px;top:994px;" width="16" height="16" viewBox="0 0 16 16"><rect x="5.500" y=".5" width="10" height="7.500" fill="#5ab6ee" stroke="#4a6a88" stroke-width="1"/><rect x=".5" y="5.500" width="10" height="7.500" fill="#49a8ea" stroke="#4a6a88" stroke-width="1"/><path d="M3.500 15h5" stroke="#8a98a6" stroke-width="1.200"/></svg>
<span class="t" style="left:45.00px;top:994.00px;font-size:12px;line-height:16px;color:#000;letter-spacing:0.142px;">Network</span>
<span class="t" style="left:283.00px;top:179.00px;font-size:12px;line-height:16px;color:#4c607a;letter-spacing:-0.252px;">Name</span>
<span class="t" style="left:697.00px;top:179.00px;font-size:12px;line-height:16px;color:#4c607a;letter-spacing:-0.003px;">Date modified</span>
<span class="t" style="left:841.00px;top:179.00px;font-size:12px;line-height:16px;color:#4c607a;letter-spacing:-0.253px;">Type</span>
<span class="t" style="left:961.00px;top:179.00px;font-size:12px;line-height:16px;color:#4c607a;letter-spacing:-0.836px;">Size</span>
<div class="r" style="left:690px;top:175px;width:1px;height:24px;background:#e5e5e5;"></div>
<div class="r" style="left:834px;top:175px;width:1px;height:24px;background:#e5e5e5;"></div>
<div class="r" style="left:954px;top:175px;width:1px;height:24px;background:#e5e5e5;"></div>
<div class="r" style="left:1033px;top:175px;width:1px;height:24px;background:#e5e5e5;"></div>
<svg class="r" style="left:479px;top:174px;" width="9" height="6" viewBox="0 0 9 6"><path d="M1 4.500l3.500-3.500l3.500 3.500" fill="none" stroke="#6a6a6a" stroke-width="1"/></svg>
<div class="r" style="left:1155px;top:172px;width:1px;height:844px;background:#f0f0f0;"></div>
<span class="t" style="left:1482.00px;top:587.50px;font-size:12px;line-height:16px;color:#6d6d6d;letter-spacing:-0.098px;">No preview available.</span>
<svg class="r" style="left:284px;top:207px;" width="16" height="16" viewBox="0 0 16 16"><rect x="2" y="1" width="11.5" height="14" fill="#f5e08a"/><rect x="2" y="1" width="11.5" height="14" fill="none" stroke="#e9d070" stroke-width=".8"/><circle cx="8" cy="5" r="2" fill="#fff" stroke="#5b7fc8" stroke-width="1"/><path d="M4.3 12.5v-1.5a3.7 3.2 0 0 1 7.4 0v1.5" fill="#fff" stroke="#5b7fc8" stroke-width="1"/><path d="M2.800 15a2.100 2.100 0 0 1-.2-4.200a2.800 2.800 0 0 1 5.200-.5a2.300 2.300 0 0 1 .3 4.700z" fill="#fbfcff" stroke="#8fb0e2" stroke-width="1"/></svg>
<span class="t" style="left:304.00px;top:208.00px;font-size:12px;line-height:16px;color:#000;letter-spacing:-0.639px;">DOKUMEN LEGAL PERUSAHAAN VAMOTELLI</span>
<span class="t" style="left:697.00px;top:208.00px;font-size:12px;line-height:16px;color:#6d6d6d;letter-spacing:-0.338px;">26/08/2025 09.48</span>
<span class="t" style="left:841.00px;top:208.00px;font-size:12px;line-height:16px;color:#6d6d6d;letter-spacing:-0.062px;">File folder</span>
<svg class="r" style="left:284px;top:228px;" width="16" height="16" viewBox="0 0 16 16"><rect x="2" y="1" width="11.5" height="14" fill="#f5e08a"/><rect x="2" y="1" width="11.5" height="14" fill="none" stroke="#e9d070" stroke-width=".8"/><circle cx="8" cy="5" r="2" fill="#fff" stroke="#5b7fc8" stroke-width="1"/><path d="M4.3 12.5v-1.5a3.7 3.2 0 0 1 7.4 0v1.5" fill="#fff" stroke="#5b7fc8" stroke-width="1"/><path d="M2.800 15a2.100 2.100 0 0 1-.2-4.200a2.800 2.800 0 0 1 5.200-.5a2.300 2.300 0 0 1 .3 4.700z" fill="#fbfcff" stroke="#8fb0e2" stroke-width="1"/></svg>
<span class="t" style="left:304.00px;top:229.00px;font-size:12px;line-height:16px;color:#000;letter-spacing:-0.598px;">FINANCE AGST 25</span>
<span class="t" style="left:697.00px;top:229.00px;font-size:12px;line-height:16px;color:#6d6d6d;letter-spacing:-0.338px;">08/09/2025 10.48</span>
<span class="t" style="left:841.00px;top:229.00px;font-size:12px;line-height:16px;color:#6d6d6d;letter-spacing:-0.062px;">File folder</span>
<svg class="r" style="left:284px;top:249px;" width="16" height="16" viewBox="0 0 16 16"><rect x="2" y="1" width="11.5" height="14" fill="#f5e08a"/><rect x="2" y="1" width="11.5" height="14" fill="none" stroke="#e9d070" stroke-width=".8"/><circle cx="8" cy="5" r="2" fill="#fff" stroke="#5b7fc8" stroke-width="1"/><path d="M4.3 12.5v-1.5a3.7 3.2 0 0 1 7.4 0v1.5" fill="#fff" stroke="#5b7fc8" stroke-width="1"/><path d="M2.800 15a2.100 2.100 0 0 1-.2-4.200a2.800 2.800 0 0 1 5.200-.5a2.300 2.300 0 0 1 .3 4.700z" fill="#fbfcff" stroke="#8fb0e2" stroke-width="1"/></svg>
<span class="t" style="left:304.00px;top:250.00px;font-size:12px;line-height:16px;color:#000;letter-spacing:-0.509px;">FINANCE LIA MEI JULI 25</span>
<span class="t" style="left:697.00px;top:250.00px;font-size:12px;line-height:16px;color:#6d6d6d;letter-spacing:-0.283px;">08/09/2025 11.28</span>
<span class="t" style="left:841.00px;top:250.00px;font-size:12px;line-height:16px;color:#6d6d6d;letter-spacing:-0.062px;">File folder</span>
<svg class="r" style="left:284px;top:270px;" width="16" height="16" viewBox="0 0 16 16"><rect x="2" y="1" width="11.5" height="14" fill="#f5e08a"/><rect x="2" y="1" width="11.5" height="14" fill="none" stroke="#e9d070" stroke-width=".8"/><circle cx="8" cy="5" r="2" fill="#fff" stroke="#5b7fc8" stroke-width="1"/><path d="M4.3 12.5v-1.5a3.7 3.2 0 0 1 7.4 0v1.5" fill="#fff" stroke="#5b7fc8" stroke-width="1"/><path d="M2.800 15a2.100 2.100 0 0 1-.2-4.200a2.800 2.800 0 0 1 5.200-.5a2.300 2.300 0 0 1 .3 4.700z" fill="#fbfcff" stroke="#8fb0e2" stroke-width="1"/></svg>
<span class="t" style="left:304.00px;top:271.00px;font-size:12px;line-height:16px;color:#000;letter-spacing:-0.887px;">KTP STAFF VAMOTELLI</span>
<span class="t" style="left:697.00px;top:271.00px;font-size:12px;line-height:16px;color:#6d6d6d;letter-spacing:-0.338px;">26/08/2025 09.48</span>
<span class="t" style="left:841.00px;top:271.00px;font-size:12px;line-height:16px;color:#6d6d6d;letter-spacing:-0.062px;">File folder</span>
<svg class="r" style="left:284px;top:291px;" width="16" height="16" viewBox="0 0 16 16"><rect x="2" y="1" width="11.5" height="14" fill="#f5e08a"/><rect x="2" y="1" width="11.5" height="14" fill="none" stroke="#e9d070" stroke-width=".8"/><circle cx="8" cy="5" r="2" fill="#fff" stroke="#5b7fc8" stroke-width="1"/><path d="M4.3 12.5v-1.5a3.7 3.2 0 0 1 7.4 0v1.5" fill="#fff" stroke="#5b7fc8" stroke-width="1"/><path d="M2.800 15a2.100 2.100 0 0 1-.2-4.200a2.800 2.800 0 0 1 5.200-.5a2.300 2.300 0 0 1 .3 4.700z" fill="#fbfcff" stroke="#8fb0e2" stroke-width="1"/></svg>
<span class="t" style="left:304.00px;top:292.00px;font-size:12px;line-height:16px;color:#000;letter-spacing:-1.335px;">RK</span>
<span class="t" style="left:697.00px;top:292.00px;font-size:12px;line-height:16px;color:#6d6d6d;letter-spacing:-0.338px;">08/09/2025 10.47</span>
<span class="t" style="left:841.00px;top:292.00px;font-size:12px;line-height:16px;color:#6d6d6d;letter-spacing:-0.062px;">File folder</span>
<svg class="r" style="left:284px;top:312px;" width="16" height="16" viewBox="0 0 16 16"><rect x="2" y="1" width="11.5" height="14" fill="#f5e08a"/><rect x="2" y="1" width="11.5" height="14" fill="none" stroke="#e9d070" stroke-width=".8"/><circle cx="8" cy="5" r="2" fill="#fff" stroke="#5b7fc8" stroke-width="1"/><path d="M4.3 12.5v-1.5a3.7 3.2 0 0 1 7.4 0v1.5" fill="#fff" stroke="#5b7fc8" stroke-width="1"/><path d="M2.800 15a2.100 2.100 0 0 1-.2-4.200a2.800 2.800 0 0 1 5.200-.5a2.300 2.300 0 0 1 .3 4.700z" fill="#fbfcff" stroke="#8fb0e2" stroke-width="1"/></svg>
<span class="t" style="left:304.00px;top:313.00px;font-size:12px;line-height:16px;color:#000;letter-spacing:-0.254px;">vamo 2023-2024</span>
<span class="t" style="left:697.00px;top:313.00px;font-size:12px;line-height:16px;color:#6d6d6d;letter-spacing:-0.283px;">02/05/2025 11.20</span>
<span class="t" style="left:841.00px;top:313.00px;font-size:12px;line-height:16px;color:#6d6d6d;letter-spacing:-0.062px;">File folder</span>
<svg class="r" style="left:284px;top:333px;" width="16" height="16" viewBox="0 0 16 16"><path d="M5.5 .5h7l3 3v12h-10z" fill="#fff" stroke="#7f8fa6" stroke-width="1"/><path d="M11 6.5h3M11 8.5h3M11 10.5h3" stroke="#2b579a" stroke-width="1"/><rect x="0" y="3" width="9" height="9" fill="#2b5fb3"/><path d="M1.8 5l1.2 5l1.5-4l1.5 4l1.2-5" stroke="#fff" stroke-width="1" fill="none"/><path d="M2.800 15a2.100 2.100 0 0 1-.2-4.200a2.800 2.800 0 0 1 5.200-.5a2.300 2.300 0 0 1 .3 4.700z" fill="#fbfcff" stroke="#8fb0e2" stroke-width="1"/></svg>
<span class="t" style="left:304.00px;top:334.00px;font-size:12px;line-height:16px;color:#000;letter-spacing:-0.147px;">Catatan</span>
<span class="t" style="left:697.00px;top:334.00px;font-size:12px;line-height:16px;color:#6d6d6d;letter-spacing:-0.338px;">27/08/2025 20.41</span>
<span class="t" style="left:841.00px;top:334.00px;font-size:12px;line-height:16px;color:#6d6d6d;letter-spacing:0.029px;">Microsoft Word D...</span>
<span class="t" style="left:997.00px;top:334.00px;font-size:12px;line-height:16px;color:#6d6d6d;letter-spacing:-0.738px;">15 KB</span>
<svg class="r" style="left:284px;top:354px;" width="16" height="16" viewBox="0 0 16 16"><rect x="0" y="0" width="5.3" height="5.5" fill="#c8264a"/><rect x="5.3" y="0" width="5.3" height="5.5" fill="#e67a2e"/><rect x="10.6" y="0" width="5.4" height="5.5" fill="#c0246a"/><rect x="0" y="5.5" width="5.3" height="5.5" fill="#5a4c9c"/><rect x="5.3" y="5.5" width="5.3" height="5.5" fill="#4a58b8"/><rect x="10.6" y="5.5" width="5.4" height="5.5" fill="#4a46b4"/><rect x="0" y="11" width="5.3" height="5" fill="#7a3f8e"/><rect x="5.3" y="11" width="5.3" height="5" fill="#2e6a50"/><rect x="10.6" y="11" width="5.4" height="5" fill="#1f8a35"/><rect x="1" y="1" width="1.2" height="2" fill="#f7d7dc"/><rect x="1" y="6.5" width="1.2" height="2" fill="#d9d7f0"/><rect x="3" y="6.5" width="4" height="1.2" fill="#e8e6f5"/><path d="M1 15.5a2.3 2.3 0 0 1 1.8-4.5l3-3.4l3.6 4a2.4 2.4 0 0 1 .6 3.9z" fill="#f4f6ff" stroke="#9bb7e6" stroke-width=".9"/></svg>
<span class="t" style="left:304.00px;top:355.00px;font-size:12px;line-height:16px;color:#000;letter-spacing:-0.556px;">DATA</span>
<span class="t" style="left:697.00px;top:355.00px;font-size:12px;line-height:16px;color:#6d6d6d;letter-spacing:-0.338px;">02/09/2025 17.30</span>
<span class="t" style="left:841.00px;top:355.00px;font-size:12px;line-height:16px;color:#6d6d6d;letter-spacing:-0.322px;">WinRAR ZIP archive</span>
<span class="t" style="left:976.00px;top:355.00px;font-size:12px;line-height:16px;color:#6d6d6d;letter-spacing:-0.671px;">12.912 KB</span>
<svg class="r" style="left:284px;top:375px;" width="16" height="16" viewBox="0 0 16 16"><rect x="0" y="0" width="5.3" height="5.5" fill="#c8264a"/><rect x="5.3" y="0" width="5.3" height="5.5" fill="#e67a2e"/><rect x="10.6" y="0" width="5.4" height="5.5" fill="#c0246a"/><rect x="0" y="5.5" width="5.3" height="5.5" fill="#5a4c9c"/><rect x="5.3" y="5.5" width="5.3" height="5.5" fill="#4a58b8"/><rect x="10.6" y="5.5" width="5.4" height="5.5" fill="#4a46b4"/><rect x="0" y="11" width="5.3" height="5" fill="#7a3f8e"/><rect x="5.3" y="11" width="5.3" height="5" fill="#2e6a50"/><rect x="10.6" y="11" width="5.4" height="5" fill="#1f8a35"/><rect x="1" y="1" width="1.2" height="2" fill="#f7d7dc"/><rect x="1" y="6.5" width="1.2" height="2" fill="#d9d7f0"/><rect x="3" y="6.5" width="4" height="1.2" fill="#e8e6f5"/><path d="M1 15.5a2.3 2.3 0 0 1 1.8-4.5l3-3.4l3.6 4a2.4 2.4 0 0 1 .6 3.9z" fill="#f4f6ff" stroke="#9bb7e6" stroke-width=".9"/></svg>
<span class="t" style="left:304.00px;top:376.00px;font-size:12px;line-height:16px;color:#000;letter-spacing:-0.598px;">FINANCE AGST 25</span>
<span class="t" style="left:697.00px;top:376.00px;font-size:12px;line-height:16px;color:#6d6d6d;letter-spacing:-0.338px;">06/10/2025 10.46</span>
<span class="t" style="left:841.00px;top:376.00px;font-size:12px;line-height:16px;color:#6d6d6d;letter-spacing:-0.322px;">WinRAR ZIP archive</span>
<span class="t" style="left:991.00px;top:376.00px;font-size:12px;line-height:16px;color:#6d6d6d;letter-spacing:-0.727px;">187 KB</span>
<svg class="r" style="left:284px;top:396px;" width="16" height="16" viewBox="0 0 16 16"><rect x="0" y="0" width="5.3" height="5.5" fill="#c8264a"/><rect x="5.3" y="0" width="5.3" height="5.5" fill="#e67a2e"/><rect x="10.6" y="0" width="5.4" height="5.5" fill="#c0246a"/><rect x="0" y="5.5" width="5.3" height="5.5" fill="#5a4c9c"/><rect x="5.3" y="5.5" width="5.3" height="5.5" fill="#4a58b8"/><rect x="10.6" y="5.5" width="5.4" height="5.5" fill="#4a46b4"/><rect x="0" y="11" width="5.3" height="5" fill="#7a3f8e"/><rect x="5.3" y="11" width="5.3" height="5" fill="#2e6a50"/><rect x="10.6" y="11" width="5.4" height="5" fill="#1f8a35"/><rect x="1" y="1" width="1.2" height="2" fill="#f7d7dc"/><rect x="1" y="6.5" width="1.2" height="2" fill="#d9d7f0"/><rect x="3" y="6.5" width="4" height="1.2" fill="#e8e6f5"/><path d="M1 15.5a2.3 2.3 0 0 1 1.8-4.5l3-3.4l3.6 4a2.4 2.4 0 0 1 .6 3.9z" fill="#f4f6ff" stroke="#9bb7e6" stroke-width=".9"/></svg>
<span class="t" style="left:304.00px;top:397.00px;font-size:12px;line-height:16px;color:#000;letter-spacing:-0.429px;">FINANCE LIA MEI-JULI 25</span>
<span class="t" style="left:697.00px;top:397.00px;font-size:12px;line-height:16px;color:#6d6d6d;letter-spacing:-0.338px;">06/10/2025 10.44</span>
<span class="t" style="left:841.00px;top:397.00px;font-size:12px;line-height:16px;color:#6d6d6d;letter-spacing:-0.322px;">WinRAR ZIP archive</span>
<span class="t" style="left:991.00px;top:397.00px;font-size:12px;line-height:16px;color:#6d6d6d;letter-spacing:-0.727px;">555 KB</span>
<div class="r" style="left:280px;top:415px;width:751px;height:21px;background:#e5f3ff;"></div>
<svg class="r" style="left:284px;top:417px;" width="16" height="16" viewBox="0 0 16 16"><rect x="0" y="0" width="5.3" height="5.5" fill="#c8264a"/><rect x="5.3" y="0" width="5.3" height="5.5" fill="#e67a2e"/><rect x="10.6" y="0" width="5.4" height="5.5" fill="#c0246a"/><rect x="0" y="5.5" width="5.3" height="5.5" fill="#5a4c9c"/><rect x="5.3" y="5.5" width="5.3" height="5.5" fill="#4a58b8"/><rect x="10.6" y="5.5" width="5.4" height="5.5" fill="#4a46b4"/><rect x="0" y="11" width="5.3" height="5" fill="#7a3f8e"/><rect x="5.3" y="11" width="5.3" height="5" fill="#2e6a50"/><rect x="10.6" y="11" width="5.4" height="5" fill="#1f8a35"/><rect x="1" y="1" width="1.2" height="2" fill="#f7d7dc"/><rect x="1" y="6.5" width="1.2" height="2" fill="#d9d7f0"/><rect x="3" y="6.5" width="4" height="1.2" fill="#e8e6f5"/><path d="M1 15.5a2.3 2.3 0 0 1 1.8-4.5l3-3.4l3.6 4a2.4 2.4 0 0 1 .6 3.9z" fill="#f4f6ff" stroke="#9bb7e6" stroke-width=".9"/></svg>
<span class="t" style="left:304.00px;top:418.00px;font-size:12px;line-height:16px;color:#000;letter-spacing:-0.471px;">FINANCE NOV 2025</span>
<span class="t" style="left:697.00px;top:418.00px;font-size:12px;line-height:16px;color:#6d6d6d;letter-spacing:-0.338px;">24/12/2025 16.02</span>
<span class="t" style="left:841.00px;top:418.00px;font-size:12px;line-height:16px;color:#6d6d6d;letter-spacing:-0.322px;">WinRAR ZIP archive</span>
<span class="t" style="left:991.00px;top:418.00px;font-size:12px;line-height:16px;color:#6d6d6d;letter-spacing:-0.727px;">471 KB</span>
<svg class="r" style="left:284px;top:438px;" width="16" height="16" viewBox="0 0 16 16"><path d="M4.500 1.200h6.500a2.500 2.500 0 0 1 2.500 2.500v9.800a1.800 1.800 0 0 1-1.800 1.800h-7.200a1.800 1.800 0 0 1-1.800-1.800v-10.500a1.800 1.800 0 0 1 1.800-1.800z" fill="#fff" stroke="#d9363e" stroke-width="1.300"/><circle cx="7.300" cy="5" r="1.200" fill="none" stroke="#d9363e" stroke-width="1"/><path d="M5.500 11c1.200-2 1.800-3.500 1.800-5M7.300 7.500c1 2 2.500 3 4.500 2.800" stroke="#d9363e" stroke-width="1" fill="none"/><path d="M2.800 15a2.100 2.100 0 0 1-.2-4.200a2.800 2.800 0 0 1 5.200-.5a2.300 2.300 0 0 1 .3 4.700z" fill="#fbfcff" stroke="#8fb0e2" stroke-width="1"/></svg>
<span class="t" style="left:304.00px;top:439.00px;font-size:12px;line-height:16px;color:#000;letter-spacing:-0.586px;">FORM_1771_624138608036000_2023_0 lapor done</span>
<span class="t" style="left:697.00px;top:439.00px;font-size:12px;line-height:16px;color:#6d6d6d;letter-spacing:-0.338px;">26/08/2025 10.04</span>
<span class="t" style="left:841.00px;top:439.00px;font-size:12px;line-height:16px;color:#6d6d6d;letter-spacing:-0.040px;">Adobe Acrobat D...</span>
<span class="t" style="left:982.00px;top:439.00px;font-size:12px;line-height:16px;color:#6d6d6d;letter-spacing:-0.671px;">2.894 KB</span>
<svg class="r" style="left:284px;top:459px;" width="16" height="16" viewBox="0 0 16 16"><path d="M5 1.500h7l3 3v11h-10z" fill="#fff" stroke="#66758a" stroke-width="1"/><path d="M11 6.500h3M11 8.500h3M11 10.500h3" stroke="#2b579a" stroke-width="1"/><rect x=".5" y="4.500" width="9" height="7.500" fill="#eef3fb" stroke="#2b579a" stroke-width="1"/><path d="M2 6.200l1.200 4l1.500-3.500l1.500 3.500l1.200-4" stroke="#2b579a" stroke-width="1" fill="none"/><path d="M2.800 15a2.100 2.100 0 0 1-.2-4.200a2.800 2.800 0 0 1 5.200-.5a2.300 2.300 0 0 1 .3 4.700z" fill="#fbfcff" stroke="#8fb0e2" stroke-width="1"/></svg>
<span class="t" style="left:304.00px;top:460.00px;font-size:12px;line-height:16px;color:#000;letter-spacing:-0.070px;">Permintaan data</span>
<span class="t" style="left:697.00px;top:460.00px;font-size:12px;line-height:16px;color:#6d6d6d;letter-spacing:-0.338px;">06/10/2025 13.53</span>
<span class="t" style="left:841.00px;top:460.00px;font-size:12px;line-height:16px;color:#6d6d6d;letter-spacing:0.028px;">Microsoft Word 9...</span>
<span class="t" style="left:997.00px;top:460.00px;font-size:12px;line-height:16px;color:#6d6d6d;letter-spacing:-0.738px;">34 KB</span>
<svg class="r" style="left:284px;top:480px;" width="16" height="16" viewBox="0 0 16 16"><path d="M4.500 1.200h6.500a2.500 2.500 0 0 1 2.500 2.500v9.800a1.800 1.800 0 0 1-1.800 1.800h-7.200a1.800 1.800 0 0 1-1.800-1.800v-10.500a1.800 1.800 0 0 1 1.800-1.800z" fill="#fff" stroke="#d9363e" stroke-width="1.300"/><circle cx="7.300" cy="5" r="1.200" fill="none" stroke="#d9363e" stroke-width="1"/><path d="M5.500 11c1.200-2 1.800-3.500 1.800-5M7.300 7.500c1 2 2.500 3 4.500 2.800" stroke="#d9363e" stroke-width="1" fill="none"/><path d="M2.800 15a2.100 2.100 0 0 1-.2-4.200a2.800 2.800 0 0 1 5.200-.5a2.300 2.300 0 0 1 .3 4.700z" fill="#fbfcff" stroke="#8fb0e2" stroke-width="1"/></svg>
<span class="t" style="left:304.00px;top:481.00px;font-size:12px;line-height:16px;color:#000;letter-spacing:-0.185px;">Persetujuan</span>
<span class="t" style="left:697.00px;top:481.00px;font-size:12px;line-height:16px;color:#6d6d6d;letter-spacing:-0.338px;">14/08/2025 14.59</span>
<span class="t" style="left:841.00px;top:481.00px;font-size:12px;line-height:16px;color:#6d6d6d;letter-spacing:-0.040px;">Adobe Acrobat D...</span>
<span class="t" style="left:982.00px;top:481.00px;font-size:12px;line-height:16px;color:#6d6d6d;letter-spacing:-0.560px;">1.118 KB</span>
<svg class="r" style="left:284px;top:501px;" width="16" height="16" viewBox="0 0 16 16"><rect x="0" y="0" width="5.3" height="5.5" fill="#c8264a"/><rect x="5.3" y="0" width="5.3" height="5.5" fill="#e67a2e"/><rect x="10.6" y="0" width="5.4" height="5.5" fill="#c0246a"/><rect x="0" y="5.5" width="5.3" height="5.5" fill="#5a4c9c"/><rect x="5.3" y="5.5" width="5.3" height="5.5" fill="#4a58b8"/><rect x="10.6" y="5.5" width="5.4" height="5.5" fill="#4a46b4"/><rect x="0" y="11" width="5.3" height="5" fill="#7a3f8e"/><rect x="5.3" y="11" width="5.3" height="5" fill="#2e6a50"/><rect x="10.6" y="11" width="5.4" height="5" fill="#1f8a35"/><rect x="1" y="1" width="1.2" height="2" fill="#f7d7dc"/><rect x="1" y="6.5" width="1.2" height="2" fill="#d9d7f0"/><rect x="3" y="6.5" width="4" height="1.2" fill="#e8e6f5"/><path d="M1 15.5a2.3 2.3 0 0 1 1.8-4.5l3-3.4l3.6 4a2.4 2.4 0 0 1 .6 3.9z" fill="#f4f6ff" stroke="#9bb7e6" stroke-width=".9"/></svg>
<span class="t" style="left:304.00px;top:502.00px;font-size:12px;line-height:16px;color:#000;letter-spacing:-1.335px;">RK</span>
<span class="t" style="left:697.00px;top:502.00px;font-size:12px;line-height:16px;color:#6d6d6d;letter-spacing:-0.338px;">06/10/2025 10.42</span>
<span class="t" style="left:841.00px;top:502.00px;font-size:12px;line-height:16px;color:#6d6d6d;letter-spacing:-0.322px;">WinRAR ZIP archive</span>
<span class="t" style="left:982.00px;top:502.00px;font-size:12px;line-height:16px;color:#6d6d6d;letter-spacing:-0.671px;">1.387 KB</span>
<svg class="r" style="left:284px;top:522px;" width="16" height="16" viewBox="0 0 16 16"><path d="M3.5 .5h7l3 3v12h-10z" fill="#fff" stroke="#8d9bb0" stroke-width="1"/><path d="M10.5 .5v3h3" fill="none" stroke="#8d9bb0" stroke-width="1"/><rect x="6" y="5" width="5.5" height="5" fill="#5b86d0"/><path d="M6 10l2-2.5l1.5 1.5l1-1l1 2z" fill="#cfe0f5"/><path d="M2.800 15a2.100 2.100 0 0 1-.2-4.200a2.800 2.800 0 0 1 5.200-.5a2.300 2.300 0 0 1 .3 4.700z" fill="#fbfcff" stroke="#8fb0e2" stroke-width="1"/></svg>
<span class="t" style="left:304.00px;top:523.00px;font-size:12px;line-height:16px;color:#000;letter-spacing:-0.603px;">Steven KTP</span>
<span class="t" style="left:697.00px;top:523.00px;font-size:12px;line-height:16px;color:#6d6d6d;letter-spacing:-0.283px;">07/10/2025 11.55</span>
<span class="t" style="left:841.00px;top:523.00px;font-size:12px;line-height:16px;color:#6d6d6d;letter-spacing:-0.890px;">JPEG File</span>
<span class="t" style="left:991.00px;top:523.00px;font-size:12px;line-height:16px;color:#6d6d6d;letter-spacing:-0.727px;">610 KB</span>
<svg class="r" style="left:284px;top:543px;" width="16" height="16" viewBox="0 0 16 16"><path d="M3.5 .5h7l3 3v12h-10z" fill="#fff" stroke="#8d9bb0" stroke-width="1"/><path d="M10.5 .5v3h3" fill="none" stroke="#8d9bb0" stroke-width="1"/><rect x="6" y="5" width="5.5" height="5" fill="#5b86d0"/><path d="M6 10l2-2.5l1.5 1.5l1-1l1 2z" fill="#cfe0f5"/><path d="M2.800 15a2.100 2.100 0 0 1-.2-4.200a2.800 2.800 0 0 1 5.200-.5a2.300 2.300 0 0 1 .3 4.700z" fill="#fbfcff" stroke="#8fb0e2" stroke-width="1"/></svg>
<span class="t" style="left:304.00px;top:544.00px;font-size:12px;line-height:16px;color:#000;letter-spacing:-0.427px;">Steven NPWP</span>
<span class="t" style="left:697.00px;top:544.00px;font-size:12px;line-height:16px;color:#6d6d6d;letter-spacing:-0.283px;">07/10/2025 11.55</span>
<span class="t" style="left:841.00px;top:544.00px;font-size:12px;line-height:16px;color:#6d6d6d;letter-spacing:-0.890px;">JPEG File</span>
<span class="t" style="left:991.00px;top:544.00px;font-size:12px;line-height:16px;color:#6d6d6d;letter-spacing:-0.727px;">324 KB</span>
<svg class="r" style="left:284px;top:564px;" width="16" height="16" viewBox="0 0 16 16"><rect x="0" y="0" width="5.3" height="5.5" fill="#c8264a"/><rect x="5.3" y="0" width="5.3" height="5.5" fill="#e67a2e"/><rect x="10.6" y="0" width="5.4" height="5.5" fill="#c0246a"/><rect x="0" y="5.5" width="5.3" height="5.5" fill="#5a4c9c"/><rect x="5.3" y="5.5" width="5.3" height="5.5" fill="#4a58b8"/><rect x="10.6" y="5.5" width="5.4" height="5.5" fill="#4a46b4"/><rect x="0" y="11" width="5.3" height="5" fill="#7a3f8e"/><rect x="5.3" y="11" width="5.3" height="5" fill="#2e6a50"/><rect x="10.6" y="11" width="5.4" height="5" fill="#1f8a35"/><rect x="1" y="1" width="1.2" height="2" fill="#f7d7dc"/><rect x="1" y="6.5" width="1.2" height="2" fill="#d9d7f0"/><rect x="3" y="6.5" width="4" height="1.2" fill="#e8e6f5"/><path d="M1 15.5a2.3 2.3 0 0 1 1.8-4.5l3-3.4l3.6 4a2.4 2.4 0 0 1 .6 3.9z" fill="#f4f6ff" stroke="#9bb7e6" stroke-width=".9"/></svg>
<span class="t" style="left:304.00px;top:565.00px;font-size:12px;line-height:16px;color:#000;letter-spacing:-0.611px;">STOCK OPNAME NOV 2025</span>
<span class="t" style="left:697.00px;top:565.00px;font-size:12px;line-height:16px;color:#6d6d6d;letter-spacing:-0.338px;">24/12/2025 16.02</span>
<span class="t" style="left:841.00px;top:565.00px;font-size:12px;line-height:16px;color:#6d6d6d;letter-spacing:-0.322px;">WinRAR ZIP archive</span>
<span class="t" style="left:982.00px;top:565.00px;font-size:12px;line-height:16px;color:#6d6d6d;letter-spacing:-0.671px;">1.382 KB</span>
<svg class="r" style="left:284px;top:585px;" width="16" height="16" viewBox="0 0 16 16"><rect x="0" y="0" width="5.3" height="5.5" fill="#c8264a"/><rect x="5.3" y="0" width="5.3" height="5.5" fill="#e67a2e"/><rect x="10.6" y="0" width="5.4" height="5.5" fill="#c0246a"/><rect x="0" y="5.5" width="5.3" height="5.5" fill="#5a4c9c"/><rect x="5.3" y="5.5" width="5.3" height="5.5" fill="#4a58b8"/><rect x="10.6" y="5.5" width="5.4" height="5.5" fill="#4a46b4"/><rect x="0" y="11" width="5.3" height="5" fill="#7a3f8e"/><rect x="5.3" y="11" width="5.3" height="5" fill="#2e6a50"/><rect x="10.6" y="11" width="5.4" height="5" fill="#1f8a35"/><rect x="1" y="1" width="1.2" height="2" fill="#f7d7dc"/><rect x="1" y="6.5" width="1.2" height="2" fill="#d9d7f0"/><rect x="3" y="6.5" width="4" height="1.2" fill="#e8e6f5"/><path d="M1 15.5a2.3 2.3 0 0 1 1.8-4.5l3-3.4l3.6 4a2.4 2.4 0 0 1 .6 3.9z" fill="#f4f6ff" stroke="#9bb7e6" stroke-width=".9"/></svg>
<span class="t" style="left:304.00px;top:586.00px;font-size:12px;line-height:16px;color:#000;letter-spacing:-0.254px;">vamo 2023-2024</span>
<span class="t" style="left:697.00px;top:586.00px;font-size:12px;line-height:16px;color:#6d6d6d;letter-spacing:-0.338px;">06/10/2025 15.22</span>
<span class="t" style="left:841.00px;top:586.00px;font-size:12px;line-height:16px;color:#6d6d6d;letter-spacing:-0.287px;">WinRAR archive</span>
<span class="t" style="left:982.00px;top:586.00px;font-size:12px;line-height:16px;color:#6d6d6d;letter-spacing:-0.671px;">9.183 KB</span>
<svg class="r" style="left:284px;top:606px;" width="16" height="16" viewBox="0 0 16 16"><path d="M5 1.500h7l3 3v11h-10z" fill="#fff" stroke="#7d8a7a" stroke-width="1"/><path d="M11 6.500h3M11 8.500h3M11 10.500h3" stroke="#1e7145" stroke-width="1"/><rect x=".5" y="4.500" width="9" height="7.500" fill="#eaf5ee" stroke="#1e7145" stroke-width="1"/><path d="M.5 7h9M3.500 7l3 5M6.500 7l-3 5" stroke="#1e7145" stroke-width="1" fill="none"/><path d="M2.800 15a2.100 2.100 0 0 1-.2-4.200a2.800 2.800 0 0 1 5.200-.5a2.300 2.300 0 0 1 .3 4.700z" fill="#fbfcff" stroke="#8fb0e2" stroke-width="1"/></svg>
<span class="t" style="left:304.00px;top:607.00px;font-size:12px;line-height:16px;color:#000;letter-spacing:-0.368px;">Vamo BS Nov 25</span>
<span class="t" style="left:697.00px;top:607.00px;font-size:12px;line-height:16px;color:#6d6d6d;letter-spacing:-0.338px;">24/12/2025 16.30</span>
<span class="t" style="left:841.00px;top:607.00px;font-size:12px;line-height:16px;color:#6d6d6d;letter-spacing:-0.144px;">Microsoft Excel 97...</span>
<span class="t" style="left:997.00px;top:607.00px;font-size:12px;line-height:16px;color:#6d6d6d;letter-spacing:-0.738px;">37 KB</span>
<svg class="r" style="left:284px;top:627px;" width="16" height="16" viewBox="0 0 16 16"><path d="M5 1.500h7l3 3v11h-10z" fill="#fff" stroke="#7d8a7a" stroke-width="1"/><path d="M11 6.500h3M11 8.500h3M11 10.500h3" stroke="#1e7145" stroke-width="1"/><rect x=".5" y="4.500" width="9" height="7.500" fill="#eaf5ee" stroke="#1e7145" stroke-width="1"/><path d="M.5 7h9M3.500 7l3 5M6.500 7l-3 5" stroke="#1e7145" stroke-width="1" fill="none"/><path d="M2.800 15a2.100 2.100 0 0 1-.2-4.200a2.800 2.800 0 0 1 5.200-.5a2.300 2.300 0 0 1 .3 4.700z" fill="#fbfcff" stroke="#8fb0e2" stroke-width="1"/></svg>
<span class="t" style="left:304.00px;top:628.00px;font-size:12px;line-height:16px;color:#000;letter-spacing:-0.320px;">Vamo LR Nov 25</span>
<span class="t" style="left:697.00px;top:628.00px;font-size:12px;line-height:16px;color:#6d6d6d;letter-spacing:-0.338px;">24/12/2025 16.28</span>
<span class="t" style="left:841.00px;top:628.00px;font-size:12px;line-height:16px;color:#6d6d6d;letter-spacing:-0.144px;">Microsoft Excel 97...</span>
<span class="t" style="left:997.00px;top:628.00px;font-size:12px;line-height:16px;color:#6d6d6d;letter-spacing:-0.738px;">35 KB</span>
<div class="r" style="left:280px;top:646px;width:751px;height:22px;background:#cce8ff;border:1px solid #99d1ff;box-sizing:border-box"></div>
<svg class="r" style="left:284px;top:648px;" width="16" height="16" viewBox="0 0 16 16"><path d="M3.5 .5h7l3 3v12h-10z" fill="#fff" stroke="#9a9a9a" stroke-width="1"/><path d="M10.5 .5v3h3" fill="none" stroke="#9a9a9a" stroke-width="1"/><path d="M2.800 15a2.100 2.100 0 0 1-.2-4.200a2.800 2.800 0 0 1 5.200-.5a2.300 2.300 0 0 1 .3 4.700z" fill="#fbfcff" stroke="#8fb0e2" stroke-width="1"/></svg>
<span class="t" style="left:304.00px;top:649.00px;font-size:12px;line-height:16px;color:#000;letter-spacing:-0.685px;">VAMOTELLI 2025.GDB</span>
<span class="t" style="left:697.00px;top:649.00px;font-size:12px;line-height:16px;color:#6d6d6d;letter-spacing:-0.338px;">24/12/2025 16.33</span>
<span class="t" style="left:841.00px;top:649.00px;font-size:12px;line-height:16px;color:#6d6d6d;letter-spacing:-0.584px;">GDB File</span>
<span class="t" style="left:976.00px;top:649.00px;font-size:12px;line-height:16px;color:#6d6d6d;letter-spacing:-0.671px;">49.600 KB</span>
<span class="t" style="left:14.00px;top:1021.00px;font-size:12px;line-height:16px;color:#2e2e2e;letter-spacing:-0.294px;">22 items</span>
<span class="t" style="left:79.00px;top:1021.00px;font-size:12px;line-height:16px;color:#2e2e2e;letter-spacing:-0.180px;">1 item selected</span>
<span class="t" style="left:163.00px;top:1021.00px;font-size:12px;line-height:16px;color:#2e2e2e;letter-spacing:-0.384px;">48,4 MB</span>
<div class="r" style="left:1872px;top:1017px;width:22px;height:23px;background:#c6e9fa;border:1px solid #3d93cc;border-bottom:none;box-sizing:border-box"></div>
<svg class="r" style="left:1876px;top:1022px;" width="16" height="13" viewBox="0 0 16 13"><rect x=".5" y=".5" width="4" height="3.500" fill="#fff" stroke="#8a8580" stroke-width=".9"/><rect x=".5" y="4.500" width="4" height="3.500" fill="#fff" stroke="#8a8580" stroke-width=".9"/><rect x=".5" y="8.500" width="4" height="3.500" fill="#fff" stroke="#8a8580" stroke-width=".9"/><path d="M2 2.300h1M2 6.300h1M2 10.300h1" stroke="#444" stroke-width="1"/><path d="M6 2.300h4M12 2.300h4M6 6.300h4M12 6.300h4M6 10.300h4M12 10.300h4" stroke="#5a6a78" stroke-width="1"/></svg>
<svg class="r" style="left:1898px;top:1022px;" width="15" height="12" viewBox="0 0 15 12"><rect x=".5" y=".5" width="13.500" height="10.500" fill="#fff" stroke="#8a8886"/><rect x="2" y="2" width="10.500" height="7.500" fill="#5d8fd0"/><path d="M2 5l4-1.500l6.500 3v3h-10.500z" fill="#2c3f66"/><path d="M5 3.500l3 .5l4.500 2v-2.500z" fill="#c9dcf2" opacity=".8"/></svg>
<div class="r" style="left:0px;top:1040px;width:1920px;height:40px;background:#222f39;background:linear-gradient(90deg,#23313b 0px,#23303a 1250px,#222a32 1400px,#1f252b 1520px,#1f2830 1640px,#1f2b35 1700px,#1f2b35 1920px)"></div>
<svg class="r" style="left:16px;top:1052px;" width="16" height="16" viewBox="0 0 16 16"><path d="M0 2.300l6.500-.9v6.200h-6.500zM7.300 1.300l8.700-1.300v7.600h-8.700zM0 8.400h6.500v6.200l-6.500-.9zM7.300 8.400h8.700v7.600l-8.700-1.300z" fill="#fff"/></svg>
<div class="r" style="left:48px;top:1040px;width:288px;height:40px;background:#f3f3f3;border-top:1px solid #c4c4c4;border-bottom:1px solid #c4c4c4;box-sizing:border-box"></div>
<svg class="r" style="left:59px;top:1051px;" width="18" height="18" viewBox="0 0 18 18"><circle cx="11" cy="6.500" r="5.300" fill="none" stroke="#222" stroke-width="1.500"/><path d="M7.300 10.300l-6.300 6.500" stroke="#222" stroke-width="1.600"/></svg>
<span class="t" style="left:88.00px;top:1051.00px;font-size:15px;line-height:20px;color:#3a3a3a;letter-spacing:-0.214px;">Type here to search</span>
<svg class="r" style="left:256px;top:1041px;" width="80" height="39" viewBox="0 0 80 39"><defs><filter id="lsb" x="-5%" y="-5%" width="110%" height="110%"><feGaussianBlur stdDeviation=".35"/></filter><clipPath id="lsc"><path d="M4 39c-4-7-2-15 5-20c-3-5 1-10 7-9c1-6 10-10 17-6c5-4 14-4 18 1c7-3 14 1 13 7c8 3 13 12 12 20c0 3-1 5-2 7z"/></clipPath></defs><g clip-path="url(#lsc)" filter="url(#lsb)"><rect width="80" height="39" fill="#e6f0e4"/><ellipse cx="17" cy="12" rx="12" ry="7" fill="#cfe9d6"/><ellipse cx="30" cy="6" rx="12" ry="5" fill="#bfe8cf"/><ellipse cx="52" cy="6" rx="12" ry="5" fill="#d6ebe0"/><ellipse cx="66" cy="12" rx="11" ry="7" fill="#d3e6ee"/><ellipse cx="40" cy="9" rx="20" ry="3.500" fill="#f0ecc8"/><ellipse cx="28" cy="10.500" rx="9" ry="2" fill="#f5d9c8"/><path d="M16 13c8-4 18-6 26-5.500c9-.5 18 1 25 5v4h-51z" fill="#5b90e2"/><path d="M34 8.500c6-1.500 14-1 20 1c-6 1-14 1-20-1z" fill="#a9b4f2"/><path d="M0 39v-15l18-8h46l16 7v16z" fill="#52a636"/><path d="M0 39v-14c4-6 12-11 20-12c6 1 12 4 16 9l4 17z" fill="#4da534"/><path d="M80 39v-16c-4-4-10-6-16-6c-6 2-14 6-20 11l-4 11z" fill="#58a83a"/><path d="M20 13.500c4-1 8-.5 11 1.500c3-2 7-3 11-2.500c5 .5 9 .5 13-.5c4-.5 8 .5 11 2c-6 2-12 4-18 5.500c-5 1.500-10 1.500-14-.5c-4-2-9-4-14-5.500z" fill="#0e4a30"/><path d="M22 20c5-1 10-.5 15 1c-2 2-5 4-9 5c-3-1-6-3-6-6z" fill="#f0b232"/><path d="M12 22c3-2 7-3 11-2c1 2 0 4-2 6c-4 0-7-1-9-4z" fill="#cfd83a"/><path d="M42 20c8-3 18-3 27-1c2 3 2 7 0 10c-6 1-13 0-19-2c-5-2-8-4-8-7z" fill="#f2b02e"/><path d="M38 19.500c6-.5 12 0 17 1c-5 1-11 2-16 2z" fill="#f5a05a"/><path d="M26 30c3-2 7-3 10-2c-1 3-4 5-8 6z" fill="#8ed03a"/><path d="M36 21c3 0 5 1 6 2.500c-2 2-3 4-2 6c1 3 6 5 10 6.500l3 3h-28c0-3 1-6 4-8c2-2 3-4 2-6c-.5-2 2-3.500 5-4z" fill="#3a80d2"/><path d="M35 21c3 0 6 1 7 2.500c-3 1.500-5 3-6 5c-2-.5-3-2-3-3.500c0-1.500.5-3 2-4z" fill="#5ccbd4"/><path d="M44 39c2-4 6-7 11-8c4 0 8 2 10 5l2 3z" fill="#3f9a34"/><path d="M9 38l5-17l5.500 17zM3 37l4-12l4.500 12zM15 39l4.500-15l6 15zM62 39l4-14l4.500 14zM68 39l4-15l5 15z" fill="#0f3a24"/></g></svg>
<svg class="r" style="left:351px;top:1051px;" width="18" height="18" viewBox="0 0 18 18"><circle cx="9" cy="9" r="7" fill="none" stroke="#fff" stroke-width="2"/></svg>
<svg class="r" style="left:399px;top:1051px;" width="18" height="18" viewBox="0 0 18 18"><rect x="2" y="4.500" width="9.500" height="9" fill="none" stroke="#fff" stroke-width="1.300"/><path d="M1 1.500h11.500M1 16.500h11.500" stroke="#fff" stroke-width="1.300"/><path d="M15 1v4M15 9v8" stroke="#fff" stroke-width="1.400"/><rect x="13.800" y="5.500" width="2.400" height="2.500" fill="#fff"/></svg>
<svg class="r" style="left:446px;top:1048px;" width="25" height="24" viewBox="0 0 25 24"><defs><linearGradient id="cpa" x1="0" y1="0" x2="0" y2="1"><stop offset="0" stop-color="#2a7ff0"/><stop offset=".45" stop-color="#35c0c8"/><stop offset=".75" stop-color="#9bd43e"/><stop offset="1" stop-color="#f5c22a"/></linearGradient><linearGradient id="cpb" x1="0" y1="0" x2="0" y2="1"><stop offset="0" stop-color="#b455ee"/><stop offset=".5" stop-color="#e84fae"/><stop offset="1" stop-color="#f5683a"/></linearGradient><linearGradient id="cpc" x1="0" y1="0" x2="1" y2="0"><stop offset="0" stop-color="#f5b62a"/><stop offset="1" stop-color="#f0553a"/></linearGradient><linearGradient id="cpd" x1="0" y1="0" x2="1" y2="0"><stop offset="0" stop-color="#2a8cf0"/><stop offset="1" stop-color="#c455e8"/></linearGradient></defs><path d="M9.500 1h7.500c2 0 3.200 1 3.800 2.800l.7 2.700h-7l-3.500 12.500c-.6 2-1.800 3-3.800 3h-1.700c-3.500 0-5.200-2.500-4.300-5.800l2.300-8.700c1.100-4.300 2.700-6.500 6-6.500z" fill="url(#cpa)"/><path d="M15.500 23h-7.500c-2 0-3.200-1-3.800-2.800l-.7-2.700h7l3.500-12.500c.6-2 1.800-3 3.800-3h1.700c3.500 0 5.200 2.500 4.300 5.800l-2.300 8.700c-1.100 4.300-2.700 6.500-6 6.500z" fill="url(#cpb)"/><path d="M3.500 17.500h7l-1 3.500c-.5 1.500-1.500 2-3 2c-2 0-3-2-3-5.500z" fill="url(#cpc)"/><path d="M21.500 6.500h-7l1-3.500c.5-1.500 1.500-2 3-2c2 0 3 2 3 5.500z" fill="url(#cpd)"/><path d="M14.500 6.500l-1.800 6.500l-2.200 4.500l1.800-6.500z" fill="#27408f" opacity=".55"/></svg>
<svg class="r" style="left:495px;top:1047px;" width="26" height="26" viewBox="0 0 26 26"><defs><linearGradient id="eg1" x1="0" y1=".2" x2="1" y2=".6"><stop offset="0" stop-color="#2a9ae8"/><stop offset=".5" stop-color="#35c8e8"/><stop offset="1" stop-color="#58e066"/></linearGradient><linearGradient id="eg2" x1="0" y1="0" x2=".6" y2="1"><stop offset="0" stop-color="#2a96e6"/><stop offset="1" stop-color="#0c58a8"/></linearGradient></defs><path d="M1 13.500a12 12 0 0 1 24 -.5c0 3.500-2.500 5.800-5.800 5.800c-2.800 0-4.200-1.200-4.200-2.400c0-1 .9-1.400.9-2.800c0-2.100-2-3.800-4.900-3.800c-4.300 0-7.500 2.900-10 3.700z" fill="url(#eg1)"/><path d="M1 13.500c.8-3.600 4.200-6.200 8.500-6.200c3.800 0 6 2.200 6 4.800c-1.200-1.200-2.800-1.700-4.500-1.700c-3.300 0-5.600 2.700-5.600 5.900c0 4.200 3.300 7.700 8.100 8.700a12 12 0 0 1-12.500-11.500z" fill="url(#eg2)"/><path d="M8.500 21.500c3.500 3.200 10 3.200 14.200-1.800c.5-.6 0-1.100-.6-.8c-3.400 1.600-8.600 1-10.700-2.800c-1.500 1.200-2.600 3.400-2.900 5.400z" fill="#114a94"/></svg>
<div class="r" style="left:533px;top:1040px;width:45px;height:40px;background:#4a5862;"></div>
<div class="r" style="left:578px;top:1040px;width:3px;height:40px;background:#353f48;"></div>
<div class="r" style="left:533px;top:1078px;width:48px;height:2px;background:#76b9ed;"></div>
<svg class="r" style="left:545px;top:1050px;" width="24" height="21" viewBox="0 0 24 21"><path d="M0 .5h9.500l2.500 2h11v3h-23z" fill="#e3a91f"/><rect x="0" y="3.500" width="23" height="16" fill="#ffd54a"/><path d="M0 3.500h23v2h-23z" fill="#ffe07a"/><path d="M5 19.500v-9.500h13v9.500h-3.500v-6h-6v6z" fill="#3b8fe2"/><rect x="8.500" y="13.500" width="6" height="6" fill="#f7c83a"/></svg>
<svg class="r" style="left:593px;top:1048px;" width="25" height="24" viewBox="0 0 25 24"><path d="M4 10l10-8.500l10 8.500v12.500h-20z" fill="#2a7fe6"/><path d="M6.500 9.500l7.500-6.500l7.500 6.500v6h-15z" fill="#7ccaf8"/><path d="M14 3l7.500 6.500v5l-11-8.500z" fill="#2d4fc4"/><path d="M4 22.500l10-8l10 8z" fill="#4aa6f2"/><path d="M14 14.500l10-4.500v12.500z" fill="#2f8cea"/><rect x="0" y="11" width="10.500" height="10.500" rx="2" fill="#1250ba"/><circle cx="5.200" cy="16.200" r="2.800" fill="none" stroke="#fff" stroke-width="1.700"/></svg>
<svg class="r" style="left:643px;top:1048px;" width="24" height="24" viewBox="0 0 24 24"><rect width="24" height="24" fill="#2f70ea"/><path d="M8.500 5l9.500 9" stroke="#fff" stroke-width="1.500"/><rect x="4.500" y="13" width="13.500" height="1.800" fill="#fff"/><rect x="4.500" y="15.800" width="15.500" height="3.400" fill="#fff"/></svg>
<svg class="r" style="left:691px;top:1047px;" width="26" height="26" viewBox="0 0 26 26"><defs><linearGradient id="ff" x1=".7" y1="0" x2=".3" y2="1"><stop offset="0" stop-color="#fff14a"/><stop offset=".35" stop-color="#ff9a1f"/><stop offset=".7" stop-color="#ff4236"/><stop offset="1" stop-color="#d31f8a"/></linearGradient></defs><path d="M14.500 .8c2 1.500 3.200 3.200 3.600 5c.8-.9 1.100-1.800 1.100-2.700c3.300 2.500 5.300 6 5.300 10.400a11.800 11.800 0 0 1-23.600 0c0-3.400 1.100-6.200 3.100-8.300c0 1.200.3 2.100.8 2.800c.3-1.300 1.100-2.500 2.100-3.200c.1.900.5 1.600 1 2c1.600-3.200 4-5 6.600-6z" fill="url(#ff)"/><circle cx="13" cy="13" r="4.600" fill="#6250ea"/><path d="M8.200 10.500c1.500-1.300 3.300-1.500 4.800-.8c-1.300.4-2 1.300-2 2.500c0 1.400 1.200 2.400 3 2.200c-1 1.500-3 2-4.700 1c-1.700-1-2.100-3.200-1.100-4.900z" fill="#ff7a22" opacity=".9"/></svg>
<svg class="r" style="left:740px;top:1047px;" width="26" height="26" viewBox="0 0 26 26"><path d="M2 8l16-6l4 4l-14 7z" fill="#15181c"/><path d="M4 10l4 13l3-1l-3-12z" fill="#1d2126"/><path d="M9 10l9-3l3 13l-9 3z" fill="#f1f3f6"/><path d="M17 9l5-1l2 11l-4 1z" fill="#d7dbe0"/><path d="M11.500 13l6-2M12 15.500l6-2M12.500 18l6-2" stroke="#9aa2ac" stroke-width=".8"/></svg>
<svg class="r" style="left:790px;top:1047px;" width="27" height="28" viewBox="0 0 27 28"><circle cx="12" cy="12" r="11.500" fill="#fff"/><path d="M12 12L2.040 6.250A11.500 11.500 0 0 1 21.960 6.250z" fill="#ea4335"/><path d="M12 12L21.960 6.250A11.500 11.500 0 0 1 12 23.500z" fill="#fbbc05"/><path d="M12 12L12 23.500A11.500 11.500 0 0 1 2.040 6.250z" fill="#34a853"/><circle cx="12" cy="12" r="5.300" fill="#fff"/><circle cx="12" cy="12" r="4.200" fill="#4285f4"/><circle cx="18.500" cy="19.500" r="7.800" fill="#e8141f"/><ellipse cx="18.500" cy="16" rx="2.100" ry="2.500" fill="#e8c4a4"/><path d="M16.400 15c.3-2 3.900-2 4.200 0c-.8-.8-3.400-.8-4.200 0z" fill="#1a1a1a"/><path d="M13.500 26c0-4.500 2.200-6.800 5-6.800s5 2.300 5 6.800c-3 1.800-7 1.800-10 0z" fill="#1a1c26"/><path d="M17.300 19.500l1.200 1.500l1.200-1.500l.3 7h-3z" fill="#fff"/><path d="M18.500 21v5.500" stroke="#7a1a1a" stroke-width=".8"/></svg>
<div class="r" style="left:782px;top:1078px;width:40px;height:2px;background:#76b9ed;"></div>
<svg class="r" style="left:839px;top:1048px;" width="24" height="24" viewBox="0 0 24 24"><path d="M9 1l12 1l-4 10l-10-1z" fill="#eef1f5"/><path d="M2 13l6-4l14 2l-5 5z" fill="#c3c9d1"/><path d="M2 13l15 3v5l-15-3z" fill="#8c949e"/><path d="M17 16l5-5v5l-5 5z" fill="#6f7781"/><rect x="8" y="8" width="4" height="3" fill="#4a86d8"/><path d="M4 15l11 2.300M4 17l11 2.300" stroke="#3c424a" stroke-width=".8"/></svg>
<svg class="r" style="left:888px;top:1048px;" width="24" height="24" viewBox="0 0 24 24"><circle cx="12" cy="12" r="11.500" fill="#fff"/><path d="M12 12L2.040 6.250A11.500 11.500 0 0 1 21.960 6.250z" fill="#ea4335"/><path d="M12 12L21.960 6.250A11.500 11.500 0 0 1 12 23.500z" fill="#fbbc05"/><path d="M12 12L12 23.500A11.500 11.500 0 0 1 2.040 6.250z" fill="#34a853"/><circle cx="12" cy="12" r="5.300" fill="#fff"/><circle cx="12" cy="12" r="4.200" fill="#4285f4"/></svg>
<svg class="r" style="left:937px;top:1047px;" width="24" height="26" viewBox="0 0 24 26"><rect x="1" y="3" width="18" height="22" fill="#f4f6f2" stroke="#c8cfc0"/><rect x="2" y="11" width="16" height="13" fill="#8bc34a"/><rect x="2" y="17" width="16" height="7" fill="#6aa52e"/><path d="M6 7v10M9 7v10" stroke="#2c3a2c" stroke-width="1.300"/><path d="M11 11h2M14 11h2" stroke="#2c3a2c" stroke-width="1.300"/><path d="M21 1l2 1.500l-7 12l-2.500 1.500l.5-3z" fill="#d9a441" stroke="#8a6a2a" stroke-width=".5"/></svg>
<svg class="r" style="left:986px;top:1049px;" width="22" height="22" viewBox="0 0 22 22"><rect width="22" height="22" rx="3" fill="#c4120c"/><path d="M4.500 16.500c2-1 4.500-4.500 5.800-8c.8-2.200.8-4.200-.3-4.200c-1.200 0-1 2.500.2 5c1.300 2.800 4 5.500 6.500 6c1.800.3 1.800-1.300 0-1.500c-3-.3-8.500 1-12.200 2.700z" fill="none" stroke="#fff" stroke-width="1.500"/></svg>
<svg class="r" style="left:1037px;top:1051px;" width="18" height="18" viewBox="0 0 24 24"><rect x="10" y="0" width="4" height="5.500" rx=".6" fill="#fff" transform="rotate(0 12 12)"/><rect x="10" y="0" width="4" height="5.500" rx=".6" fill="#fff" transform="rotate(45 12 12)"/><rect x="10" y="0" width="4" height="5.500" rx=".6" fill="#fff" transform="rotate(90 12 12)"/><rect x="10" y="0" width="4" height="5.500" rx=".6" fill="#fff" transform="rotate(135 12 12)"/><rect x="10" y="0" width="4" height="5.500" rx=".6" fill="#fff" transform="rotate(180 12 12)"/><rect x="10" y="0" width="4" height="5.500" rx=".6" fill="#fff" transform="rotate(225 12 12)"/><rect x="10" y="0" width="4" height="5.500" rx=".6" fill="#fff" transform="rotate(270 12 12)"/><rect x="10" y="0" width="4" height="5.500" rx=".6" fill="#fff" transform="rotate(315 12 12)"/><circle cx="12" cy="12" r="6.500" fill="none" stroke="#fff" stroke-width="4"/></svg>
<svg class="r" style="left:1084px;top:1048px;" width="24" height="24" viewBox="0 0 24 24"><rect width="24" height="24" rx="2" fill="#1c2fa6"/><path d="M3 4h18l-1.500 2h-15z" fill="#fff"/><path d="M6.500 7.500h11l3 9h-17z" fill="#fff"/><path d="M7.500 9h9l2 6h-13z" fill="#1c2fa6"/><rect x="3" y="17.500" width="18" height="3" fill="#fff"/></svg>
<svg class="r" style="left:1133px;top:1048px;" width="24" height="24" viewBox="0 0 24 24"><circle cx="12" cy="12" r="11.500" fill="#e8304c"/><path d="M7.500 18.500l4.500-12.500l4.500 12.500" fill="none" stroke="#fff" stroke-width="2.300"/></svg>
<svg class="r" style="left:1182px;top:1048px;" width="24" height="24" viewBox="0 0 24 24"><rect width="24" height="24" rx="2" fill="#1c2fa6"/><rect x="7" y="4" width="10" height="6" fill="#fff"/><rect x="4" y="10" width="16" height="6" fill="#fff"/><rect x="4" y="17" width="16" height="3" fill="#fff"/></svg>
<svg class="r" style="left:1230px;top:1048px;" width="25" height="25" viewBox="0 0 25 25"><circle cx="12" cy="12" r="11.500" fill="#fff"/><path d="M12 12L2.040 6.250A11.500 11.500 0 0 1 21.960 6.250z" fill="#ea4335"/><path d="M12 12L21.960 6.250A11.500 11.500 0 0 1 12 23.500z" fill="#fbbc05"/><path d="M12 12L12 23.500A11.500 11.500 0 0 1 2.040 6.250z" fill="#34a853"/><circle cx="12" cy="12" r="5.300" fill="#fff"/><circle cx="12" cy="12" r="4.200" fill="#4285f4"/><circle cx="18.500" cy="18.500" r="5.500" fill="#8a5fd6"/><path d="M16.500 21l2-5l2 5" fill="none" stroke="#e8dcff" stroke-width="1"/></svg>
<div class="r" style="left:1223px;top:1078px;width:40px;height:2px;background:#76b9ed;"></div>
<svg class="r" style="left:1279px;top:1048px;" width="25" height="24" viewBox="0 0 25 24"><rect x="7" y="1" width="17" height="21" rx="1.500" fill="#21a366"/><rect x="15.500" y="1" width="8.500" height="7" fill="#33c481"/><rect x="7" y="8" width="8.500" height="7" fill="#107c41"/><rect x="15.500" y="15" width="8.500" height="7" fill="#185c37"/><rect x="7" y="15" width="8.500" height="7" fill="#185c37"/><rect x="0" y="5" width="13" height="13" rx="1.500" fill="#107c41"/><path d="M3.500 8l6 7M9.500 8l-6 7" stroke="#fff" stroke-width="1.700"/></svg>
<div class="r" style="left:1272px;top:1078px;width:40px;height:2px;background:#76b9ed;"></div>
<span class="t" style="left:1361.00px;top:1052.00px;font-size:12px;line-height:16px;color:#fff;letter-spacing:-0.288px;">Address</span>
<div class="r" style="left:1409px;top:1051px;width:230px;height:20px;background:#fff;"></div>
<div class="r" style="left:1622px;top:1052px;width:1px;height:18px;background:#d0d0d0;"></div>
<div class="r" style="left:1623px;top:1051px;width:16px;height:20px;background:#f2f2f2;"></div>
<svg class="r" style="left:1609px;top:1058px;" width="9" height="6" viewBox="0 0 9 6"><path d="M1 1l3.500 3.500l3.500-3.500" fill="none" stroke="#444" stroke-width="1.100"/></svg>
<svg class="r" style="left:1625px;top:1055px;" width="12" height="13" viewBox="0 0 12 13"><path d="M9.500 4a4.300 4.300 0 1 1-3.300-1.600" fill="none" stroke="#7a7a7a" stroke-width="1.300"/><path d="M6 .5v3.500h3.500" fill="none" stroke="#7a7a7a" stroke-width="1.300"/></svg>
<svg class="r" style="left:1647px;top:1056px;" width="12" height="8" viewBox="0 0 12 8"><path d="M1 6.500l5-5l5 5" fill="none" stroke="#fff" stroke-width="1.300"/></svg>
<svg class="r" style="left:1670px;top:1051px;" width="14" height="18" viewBox="0 0 14 18"><rect x="1.500" y="5" width="8" height="8" rx="1.500" fill="none" stroke="#fff" stroke-width="1.200"/><path d="M9.500 8l3-1.500v5l-3-1.500" fill="none" stroke="#fff" stroke-width="1.100"/><path d="M3 2c2-1.500 4-1.500 6 0M3 16c2 1.500 4 1.500 6 0" fill="none" stroke="#fff" stroke-width="1"/></svg>
<svg class="r" style="left:1692px;top:1053px;" width="19" height="16" viewBox="0 0 19 16"><path d="M4 11a3 3 0 0 1 0-6a4 4 0 0 1 7.500-1a3.300 3.300 0 0 1 1 6.500z" fill="#d8d8d8"/><circle cx="12.500" cy="11" r="4.500" fill="#8a8a8a"/><path d="M11.300 9v4M13.700 9v4" stroke="#fff" stroke-width="1.100"/></svg>
<svg class="r" style="left:1717px;top:1053px;" width="17" height="16" viewBox="0 0 17 16"><rect x="3.500" y="1.500" width="12" height="8.500" fill="none" stroke="#fff" stroke-width="1.200"/><path d="M9.500 10v3M5.500 13.500h8" stroke="#fff" stroke-width="1.200"/><rect x=".5" y="1.500" width="3" height="3" fill="#23313b" stroke="#fff" stroke-width="1"/><path d="M2 4.500v9.500h4" fill="none" stroke="#fff" stroke-width="1"/></svg>
<svg class="r" style="left:1740px;top:1052px;" width="18" height="16" viewBox="0 0 18 16"><path d="M1.500 5.500h3l4-4v13l-4-4h-3z" fill="none" stroke="#fff" stroke-width="1.200"/><path d="M10.500 5.500a3.500 3.500 0 0 1 0 5" fill="none" stroke="#fff" stroke-width="1.100"/><path d="M12.500 3.500a6 6 0 0 1 0 9" fill="none" stroke="#9aa4ac" stroke-width="1.100"/><path d="M14.500 1.500a8.500 8.500 0 0 1 0 13" fill="none" stroke="#6a747c" stroke-width="1.100"/></svg>
<span class="t" style="left:1767.50px;top:1052.00px;font-size:12px;line-height:16px;color:#fff;letter-spacing:-1.001px;">ENG</span>
<span class="t" style="left:1818.50px;top:1043.00px;font-size:12px;line-height:16px;color:#fff;letter-spacing:-0.605px;">15.02</span>
<span class="t" style="left:1803.00px;top:1061.00px;font-size:12px;line-height:16px;color:#fff;letter-spacing:-0.205px;">31/01/2026</span>
<svg class="r" style="left:1878px;top:1050px;" width="25" height="26" viewBox="0 0 25 26"><path d="M1.500 1.500h15v11h-10l-3 3v-3h-2z" fill="#fff"/><path d="M4 4.500h10M4 7h10M4 9.500h6" stroke="#23313b" stroke-width="1"/><circle cx="16" cy="16.500" r="7.300" fill="#2a333b" stroke="#aeb4ba" stroke-width="1"/></svg>
<span class="t" style="left:1891.05px;top:1059.50px;font-size:12px;line-height:14px;color:#fff;letter-spacing:-0.173px;">8</span>
<div class="r" style="left:1915px;top:1040px;width:1px;height:40px;background:#5a646c;"></div>
</body></html>
